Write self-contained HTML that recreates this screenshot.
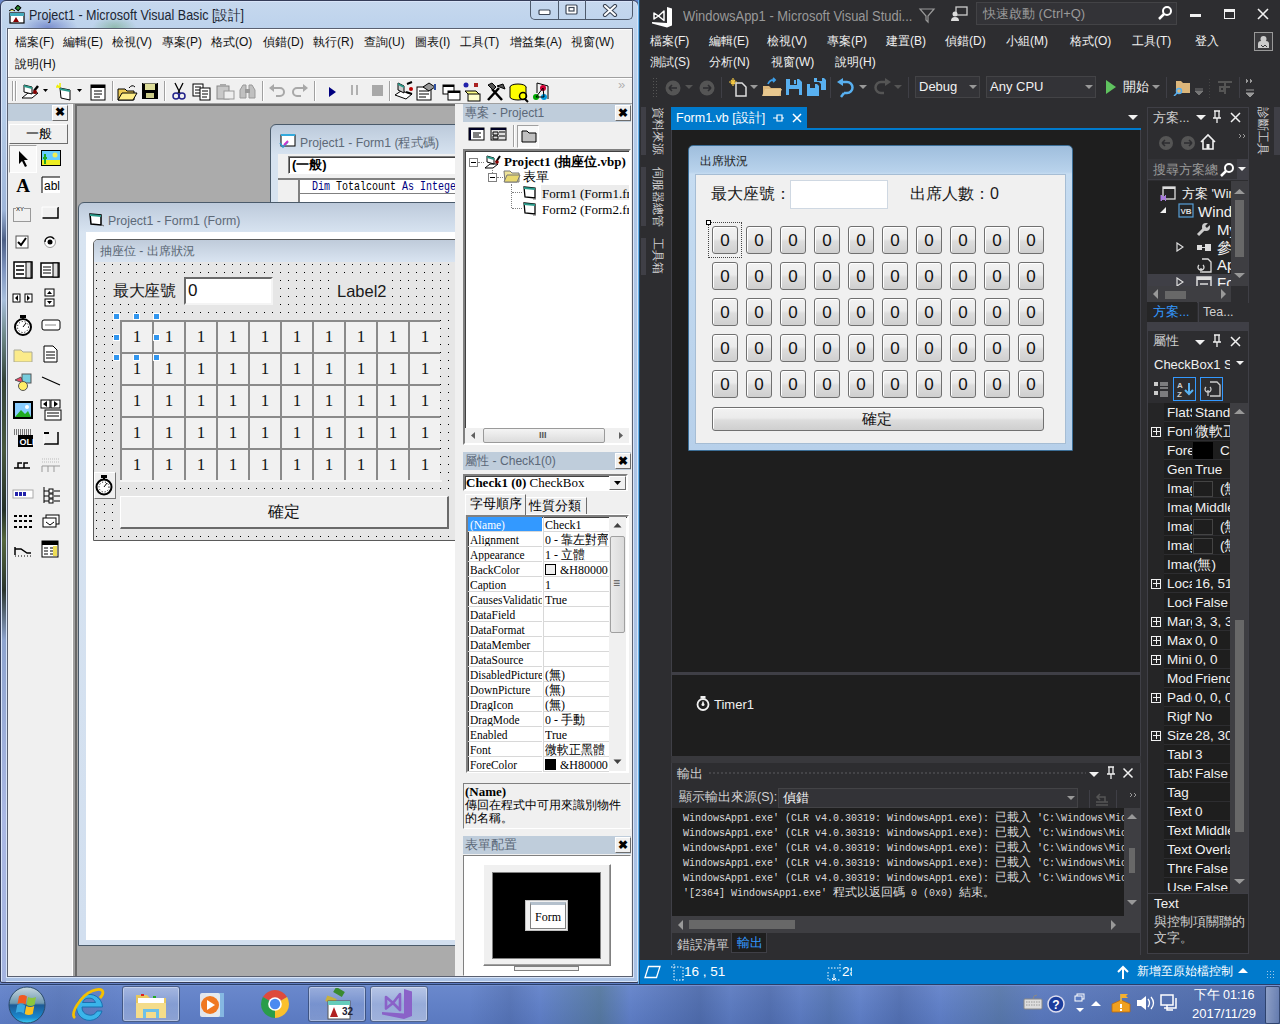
<!DOCTYPE html><html><head><meta charset="utf-8"><style>
*{margin:0;padding:0;box-sizing:border-box}
html,body{width:1280px;height:1024px;overflow:hidden}
body{position:relative;font-family:"Liberation Sans",sans-serif;background:#5b7cc4}
div{position:absolute}
.ui{font-size:13px;line-height:15px}
.mono{font-family:"Liberation Mono",monospace}
.serif{font-family:"Liberation Serif",serif}
</style></head><body>

<div style="left:0px;top:0px;width:1280px;height:1024px;background:linear-gradient(90deg,#6a86c8,#5b7bc2 40%,#6d8fd0 70%,#5876c0)"></div>
<div style="left:0px;top:0px;width:639px;height:983px;background:linear-gradient(180deg,#c6d8ee 0px,#bcd2ec 30px,#aec6e6 200px,#a9c1e4 900px);border:1px solid #343c58;border-radius:6px 6px 2px 2px;box-shadow:inset 0 0 0 1px #d8e4f8"></div>
<div style="left:18px;top:14px;width:60px;height:15px;background:radial-gradient(ellipse at 50% 90%,rgba(40,60,170,.45),rgba(40,60,170,0) 70%)"></div>
<div style="left:92px;top:16px;width:45px;height:13px;background:radial-gradient(ellipse at 50% 90%,rgba(60,140,60,.35),rgba(60,140,60,0) 70%)"></div>
<div style="left:29px;top:7px;white-space:nowrap;font-size:14px;color:#1b2533;line-height:16px;transform:scaleX(.895);transform-origin:0 0">Project1 - Microsoft Visual Basic [設計]</div>
<svg style="position:absolute;left:7px;top:5px;" width="20" height="20" viewBox="0 0 20 20"><rect x="9" y="1" width="4" height="4" fill="#2a8a30" stroke="#000" transform="rotate(40 11 3)"/><path d="M2 6 l3-2 l3 2" stroke="#000" fill="#dd5"/><rect x="3" y="8" width="14" height="10" fill="#fff" stroke="#000" stroke-width="1.2"/><rect x="3" y="8" width="14" height="3" fill="#4ab"/><path d="M6 17 l3-5 l3 5z" fill="#800"/></svg>
<div style="left:530px;top:0px;width:103px;height:20px;border:1px solid #4e5a6c;border-top:none;border-radius:0 0 5px 5px"></div>
<div style="left:558px;top:0px;width:1px;height:20px;background:#4e5a6c"></div>
<div style="left:585px;top:0px;width:1px;height:20px;background:#4e5a6c"></div>
<svg style="position:absolute;left:538px;top:9px;" width="14" height="8" viewBox="0 0 14 8"><rect x="1" y="1" width="11" height="4.5" rx="1" fill="#fff" stroke="#3c4656" stroke-width="1.2"/></svg>
<svg style="position:absolute;left:565px;top:4px;" width="14" height="12" viewBox="0 0 14 12"><rect x="1" y="1" width="11" height="9" rx="1" fill="#fff" stroke="#3c4656" stroke-width="1.2"/><rect x="4" y="3.5" width="5" height="3.5" fill="none" stroke="#3c4656" stroke-width="1.2"/></svg>
<svg style="position:absolute;left:602px;top:4px;" width="16" height="13" viewBox="0 0 16 13"><path d="M3 2 L13 11 M13 2 L3 11" stroke="#3c4656" stroke-width="4.2" stroke-linecap="round"/><path d="M3 2 L13 11 M13 2 L3 11" stroke="#fff" stroke-width="2" stroke-linecap="round"/></svg>
<div style="left:2px;top:120px;width:4px;height:862px;background:linear-gradient(180deg,#b4cbe7 0px,#9fb6da 90px,#4c5f86 120px,#7f95bf 150px,#a9bfdc 180px,#6f8a8a 215px,#34443a 260px,#48583e 330px,#243028 390px,#56683e 420px,#2a342c 470px,#8ea4cf 520px,#aab8e4 700px,#a4b4e0 862px)"></div>
<div style="left:6px;top:28px;width:628px;height:950px;border:1px solid #d8e4f8"></div>
<div style="left:7px;top:28px;width:626px;height:949px;background:#f0f0f0;border:1px solid #5a6070;box-shadow:inset 1px 1px #fff"></div>
<div style="left:15px;top:34px;white-space:nowrap;font-size:12px;color:#111;line-height:16px">檔案(F)</div>
<div style="left:63px;top:34px;white-space:nowrap;font-size:12px;color:#111;line-height:16px">編輯(E)</div>
<div style="left:112px;top:34px;white-space:nowrap;font-size:12px;color:#111;line-height:16px">檢視(V)</div>
<div style="left:162px;top:34px;white-space:nowrap;font-size:12px;color:#111;line-height:16px">專案(P)</div>
<div style="left:211px;top:34px;white-space:nowrap;font-size:12px;color:#111;line-height:16px">格式(O)</div>
<div style="left:263px;top:34px;white-space:nowrap;font-size:12px;color:#111;line-height:16px">偵錯(D)</div>
<div style="left:313px;top:34px;white-space:nowrap;font-size:12px;color:#111;line-height:16px">執行(R)</div>
<div style="left:364px;top:34px;white-space:nowrap;font-size:12px;color:#111;line-height:16px">查詢(U)</div>
<div style="left:415px;top:34px;white-space:nowrap;font-size:12px;color:#111;line-height:16px">圖表(I)</div>
<div style="left:460px;top:34px;white-space:nowrap;font-size:12px;color:#111;line-height:16px">工具(T)</div>
<div style="left:510px;top:34px;white-space:nowrap;font-size:12px;color:#111;line-height:16px">增益集(A)</div>
<div style="left:571px;top:34px;white-space:nowrap;font-size:12px;color:#111;line-height:16px">視窗(W)</div>
<div style="left:15px;top:56px;white-space:nowrap;font-size:12px;color:#111;line-height:16px">說明(H)</div>
<div style="left:8px;top:77px;width:624px;height:1px;background:#a0a0a0"></div>
<div style="left:8px;top:78px;width:624px;height:1px;background:#fff"></div>
<div style="left:8px;top:79px;width:624px;height:24px;background:#f0f0f0"></div>
<div style="left:8px;top:103px;width:624px;height:1px;background:#a0a0a0"></div>
<div style="left:8px;top:104px;width:67px;height:872px;background:#f0f0f0"></div>
<div style="left:8px;top:104px;width:60px;height:17px;background:#bfcddb"></div>
<div style="left:52px;top:105px;width:16px;height:16px;background:#f0f0f0;border:1px solid;border-color:#fff #6d6d6d #6d6d6d #fff"></div>
<div style="left:55px;top:104px;white-space:nowrap;font-size:12px;font-weight:bold;color:#000;line-height:16px">✖</div>
<div style="left:9px;top:124px;width:59px;height:20px;background:#f0f0f0;border:1px solid;border-color:#fff #6d6d6d #6d6d6d #fff"></div>
<div style="left:26px;top:126px;white-space:nowrap;font-size:13px;color:#000;line-height:16px">一般</div>
<div style="left:72px;top:104px;width:1px;height:872px;background:#fff"></div>
<div style="left:73px;top:104px;width:2px;height:872px;background:#a0a0a0"></div>
<div style="left:75px;top:104px;width:380px;height:872px;background:#ababab;border-left:2px solid #696969;border-top:2px solid #696969"></div>
<div style="left:455px;top:104px;width:177px;height:872px;background:#f0f0f0"></div>
<div style="left:12px;top:81px;width:1px;height:20px;background:#a0a0a0;box-shadow:1px 0 #fff"></div>
<div style="left:15px;top:81px;width:1px;height:20px;background:#a0a0a0;box-shadow:1px 0 #fff"></div>
<div style="left:112px;top:81px;width:1px;height:20px;background:#a0a0a0;box-shadow:1px 0 #fff"></div>
<div style="left:164px;top:81px;width:1px;height:20px;background:#a0a0a0;box-shadow:1px 0 #fff"></div>
<div style="left:262px;top:81px;width:1px;height:20px;background:#a0a0a0;box-shadow:1px 0 #fff"></div>
<div style="left:314px;top:81px;width:1px;height:20px;background:#a0a0a0;box-shadow:1px 0 #fff"></div>
<div style="left:389px;top:81px;width:1px;height:20px;background:#a0a0a0;box-shadow:1px 0 #fff"></div>
<svg style="position:absolute;left:20px;top:81px;" width="22" height="20" viewBox="0 0 22 20"><path d="M2 17 L8 12 L18 12 L12 17 Z" fill="#fff" stroke="#000"/><path d="M4 4 L12 6 L12 13 L4 11 Z" fill="#fff" stroke="#000"/><path d="M4 4 L12 6 L12 8 L4 6Z" fill="#2a9a8a"/><path d="M14 10 l4-5" stroke="#000" stroke-width="2.5"/><circle cx="15" cy="11" r="2" fill="#800"/></svg>
<svg style="position:absolute;left:43px;top:89px;" width="6" height="4" viewBox="0 0 6 4"><path d="M0 0h5l-2.5 3z" fill="#000"/></svg>
<svg style="position:absolute;left:54px;top:81px;" width="22" height="21" viewBox="0 0 22 21"><path d="M3 4 L6 7 M6 2 v4 M2 6h4" stroke="#ee0" stroke-width="1.5"/><path d="M6 7 L16 9 L16 19 L7 17 Z" fill="#fff" stroke="#000"/><path d="M6 7 L16 9 L16 11 L6 9Z" fill="#2a9a8a"/></svg>
<svg style="position:absolute;left:77px;top:89px;" width="6" height="4" viewBox="0 0 6 4"><path d="M0 0h5l-2.5 3z" fill="#000"/></svg>
<svg style="position:absolute;left:88px;top:82px;" width="20" height="20" viewBox="0 0 20 20"><rect x="3" y="3" width="14" height="15" fill="#fff" stroke="#000"/><rect x="3" y="3" width="14" height="3" fill="#000"/><path d="M6 9h8M6 12h8M6 15h6" stroke="#000"/></svg>
<svg style="position:absolute;left:116px;top:82px;" width="22" height="20" viewBox="0 0 22 20"><path d="M2 7h7l2 2h7v9H2z" fill="#ec5" stroke="#000"/><path d="M2 18l4-7h15l-4 7z" fill="#fe8" stroke="#000"/><path d="M13 6 q3-4 6 -1" stroke="#000" fill="none"/></svg>
<svg style="position:absolute;left:140px;top:81px;" width="20" height="20" viewBox="0 0 20 20"><rect x="2" y="2" width="16" height="16" fill="#000"/><rect x="5" y="3" width="10" height="6" fill="#dd9"/><rect x="6" y="12" width="8" height="5" fill="#cc8"/><rect x="3" y="2" width="14" height="1" fill="#776"/></svg>
<svg style="position:absolute;left:169px;top:81px;" width="20" height="21" viewBox="0 0 20 21"><path d="M6 2 L11 12 M14 2 L9 12" stroke="#000" stroke-width="1.3"/><circle cx="7" cy="15" r="3" fill="none" stroke="#22228a" stroke-width="1.5"/><circle cx="13" cy="15" r="3" fill="none" stroke="#22228a" stroke-width="1.5"/></svg>
<svg style="position:absolute;left:191px;top:81px;" width="22" height="20" viewBox="0 0 22 20"><rect x="2" y="3" width="10" height="12" fill="#fff" stroke="#000"/><path d="M4 6h6M4 9h6M4 12h5" stroke="#000"/><rect x="9" y="7" width="10" height="12" fill="#fff" stroke="#000"/><path d="M11 10h6M11 13h6M11 16h5" stroke="#000"/></svg>
<svg style="position:absolute;left:215px;top:81px;" width="22" height="20" viewBox="0 0 22 20"><rect x="2" y="5" width="12" height="13" fill="#c8c8c8" stroke="#888"/><rect x="9" y="10" width="10" height="8" fill="#eee" stroke="#999"/><rect x="5" y="3" width="6" height="3" fill="#aaa"/></svg>
<svg style="position:absolute;left:237px;top:81px;" width="22" height="20" viewBox="0 0 22 20"><path d="M3 17 v-8 l3-5 h3 v13z M12 17v-13h3l3 5v8z" fill="#c0c0c0" stroke="#999"/><rect x="8" y="8" width="5" height="4" fill="#999"/></svg>
<svg style="position:absolute;left:267px;top:82px;" width="20" height="18" viewBox="0 0 20 18"><path d="M5 6 h8 a4 4 0 0 1 0 8 h-4" stroke="#a8a8a8" stroke-width="2" fill="none"/><path d="M2 6 l5-4 v8z" fill="#a8a8a8"/></svg>
<svg style="position:absolute;left:290px;top:82px;" width="20" height="18" viewBox="0 0 20 18"><path d="M15 6 h-8 a4 4 0 0 0 0 8 h4" stroke="#a8a8a8" stroke-width="2" fill="none"/><path d="M18 6 l-5-4 v8z" fill="#a8a8a8"/></svg>
<svg style="position:absolute;left:326px;top:85px;" width="14" height="14" viewBox="0 0 14 14"><path d="M3 2 L10 7 L3 12z" fill="#000080"/></svg>
<div style="left:351px;top:85px;width:2px;height:10px;background:#b0b0b0"></div>
<div style="left:356px;top:85px;width:2px;height:10px;background:#b0b0b0"></div>
<div style="left:372px;top:85px;width:11px;height:11px;background:#a8a8a8"></div>
<svg style="position:absolute;left:393px;top:80px;" width="22" height="22" viewBox="0 0 22 22"><path d="M2 15 L8 11 L19 14 L13 19z" fill="#fff" stroke="#000"/><path d="M5 3 L11 6 L11 13 L5 10z" fill="#ccc" stroke="#000"/><path d="M5 3 L11 6 L11 8 L5 5Z" fill="#2a9a8a"/><path d="M14 4 l5 -2 M13 12 l6 2" stroke="#000" stroke-width="2"/><circle cx="18" cy="9" r="2" fill="#b00"/></svg>
<svg style="position:absolute;left:415px;top:81px;" width="22" height="22" viewBox="0 0 22 22"><rect x="2" y="6" width="14" height="13" fill="#fff" stroke="#000"/><path d="M4 10h10M4 13h10M4 16h7" stroke="#000"/><path d="M8 6 L14 2 L20 6 L14 10z" fill="#999" stroke="#000"/><rect x="19" y="3" width="2" height="6" fill="#3050a0"/></svg>
<svg style="position:absolute;left:440px;top:82px;" width="22" height="21" viewBox="0 0 22 21"><rect x="3" y="3" width="11" height="9" fill="#fff" stroke="#000"/><rect x="3" y="3" width="11" height="2" fill="#000"/><rect x="8" y="9" width="12" height="9" fill="#fff" stroke="#000"/><rect x="8" y="9" width="12" height="2" fill="#000"/></svg>
<svg style="position:absolute;left:462px;top:81px;" width="22" height="22" viewBox="0 0 22 22"><circle cx="4" cy="4" r="2.5" fill="#22a"/><rect x="12" y="2" width="4" height="4" fill="#a22"/><path d="M3 10 L14 10 L18 14 L7 14z" fill="#ff8" stroke="#000"/><rect x="6" y="13" width="12" height="7" fill="#ffc" stroke="#000"/></svg>
<svg style="position:absolute;left:485px;top:81px;" width="22" height="22" viewBox="0 0 22 22"><path d="M3 19 L14 7" stroke="#000" stroke-width="2.5"/><path d="M17 19 L7 8" stroke="#000" stroke-width="2.5"/><path d="M3 4 l5 5 l3-3 l-4-4z M12 5 l6-2 l2 5z" fill="#555" stroke="#000"/></svg>
<svg style="position:absolute;left:508px;top:81px;" width="22" height="22" viewBox="0 0 22 22"><ellipse cx="10" cy="6" rx="8" ry="3" fill="#ff0" stroke="#000"/><path d="M2 6 v10 a8 3 0 0 0 16 0 v-10" fill="#ff0" stroke="#000"/><circle cx="15" cy="15" r="3.5" fill="none" stroke="#000" stroke-width="1.5"/><path d="M17 18 l3 3" stroke="#000" stroke-width="2"/></svg>
<svg style="position:absolute;left:531px;top:80px;" width="22" height="22" viewBox="0 0 22 22"><path d="M6 3 L17 6 L17 19" fill="none" stroke="#000"/><path d="M6 3 v10" stroke="#000"/><circle cx="12" cy="8" r="3" fill="#c03"/><circle cx="5" cy="17" r="3" fill="#0a0"/><circle cx="13" cy="17" r="3" fill="#09d"/><path d="M12 8 L5 17 M12 8 L13 17 M5 17h8" stroke="#000"/></svg>
<div style="left:618px;top:77px;white-space:nowrap;font-size:13px;color:#b0b0b0">&raquo;</div>
<div style="left:9px;top:145px;width:28px;height:28px;background:#f8f8f8;border:1px solid;border-color:#a0a0a0 #fff #fff #a0a0a0"></div>
<svg style="position:absolute;left:15px;top:150px;" width="16" height="18" viewBox="0 0 16 18"><path d="M4 1 L4 14 L7 11 L10 17 L12 16 L9 10 L13 10z" fill="#000"/></svg>
<svg style="position:absolute;left:40px;top:149px;" width="22" height="18" viewBox="0 0 22 18"><rect x="1" y="1" width="20" height="16" fill="#000"/><rect x="2" y="2" width="18" height="9" fill="#6cf"/><rect x="2" y="11" width="18" height="5" fill="#ee2"/><circle cx="15" cy="6" r="2.5" fill="#ee5"/><path d="M5 15 v-10 M3 9 h4" stroke="#2a2" stroke-width="2"/></svg>
<svg style="position:absolute;left:12px;top:176px;" width="22" height="18" viewBox="0 0 22 18"><text x="11" y="16" font-family="Liberation Serif" font-size="19" font-weight="bold" text-anchor="middle" fill="#000">A</text></svg>
<svg style="position:absolute;left:41px;top:176px;" width="20" height="18" viewBox="0 0 20 18"><rect x="1" y="1" width="18" height="16" fill="#fff"/><path d="M1 1 v16 M1 1 h18" stroke="#000"/><text x="3" y="14" font-family="Liberation Sans" font-size="12" fill="#000">abl</text></svg>
<svg style="position:absolute;left:12px;top:204px;" width="20" height="18" viewBox="0 0 20 18"><rect x="1.5" y="4.5" width="17" height="13" fill="none" stroke="#999"/><rect x="4" y="1" width="8" height="6" fill="#f0f0f0"/><text x="4" y="7" font-size="6" fill="#000">XY</text></svg>
<svg style="position:absolute;left:40px;top:205px;" width="20" height="16" viewBox="0 0 20 16"><path d="M2 13 h16 v-11" stroke="#000" stroke-width="1.5" fill="none"/><path d="M2 14 v-12 h16" stroke="#fff" fill="none"/></svg>
<svg style="position:absolute;left:15px;top:235px;" width="14" height="14" viewBox="0 0 14 14"><rect x="1" y="1" width="12" height="12" fill="#fff" stroke="#555"/><path d="M3 7 l3 3 l5 -7" stroke="#000" stroke-width="2" fill="none"/></svg>
<svg style="position:absolute;left:43px;top:235px;" width="14" height="14" viewBox="0 0 14 14"><circle cx="7" cy="7" r="5.5" fill="#fff" stroke="#999"/><circle cx="7" cy="7" r="2.5" fill="#000"/><path d="M2 7 a5 5 0 0 1 9-3" stroke="#000" fill="none" stroke-width="1.3"/></svg>
<svg style="position:absolute;left:13px;top:261px;" width="20" height="18" viewBox="0 0 20 18"><rect x="1" y="1" width="18" height="16" fill="#fff" stroke="#000" stroke-width="1.5"/><rect x="13" y="1" width="5" height="16" fill="#ddd" stroke="#000"/><path d="M3 5h8M3 9h8M3 13h8" stroke="#000" stroke-width="1.5"/></svg>
<svg style="position:absolute;left:40px;top:262px;" width="20" height="16" viewBox="0 0 20 16"><rect x="1" y="1" width="18" height="14" fill="#fff" stroke="#000" stroke-width="1.5"/><rect x="13" y="1" width="5" height="14" fill="#ddd" stroke="#000"/><path d="M3 5h8M3 8h8M3 11h8" stroke="#000" stroke-width="1.2"/></svg>
<svg style="position:absolute;left:12px;top:292px;" width="22" height="12" viewBox="0 0 22 12"><rect x="1" y="2" width="7" height="8" fill="#fff" stroke="#000"/><rect x="13" y="2" width="7" height="8" fill="#fff" stroke="#000"/><path d="M6 3 l-3 3 l3 3z M15 3 l3 3 l-3 3z" fill="#000"/></svg>
<svg style="position:absolute;left:44px;top:288px;" width="12" height="20" viewBox="0 0 12 20"><rect x="1" y="1" width="9" height="7" fill="#fff" stroke="#000"/><rect x="1" y="11" width="9" height="7" fill="#fff" stroke="#000"/><path d="M3 6 l2.5-3 l2.5 3z M3 13 l2.5 3 l2.5-3z" fill="#000"/></svg>
<svg style="position:absolute;left:13px;top:315px;" width="20" height="21" viewBox="0 0 20 21"><circle cx="10" cy="12" r="8" fill="#fff" stroke="#000" stroke-width="2"/><rect x="7" y="0" width="6" height="3" fill="#000"/><path d="M10 12 l3-4" stroke="#000"/><circle cx="10" cy="12" r="5.5" fill="none" stroke="#000" stroke-dasharray="1 2"/></svg>
<svg style="position:absolute;left:41px;top:319px;" width="20" height="12" viewBox="0 0 20 12"><rect x="1" y="1" width="18" height="10" rx="2" fill="#fff" stroke="#000"/><path d="M4 6h11" stroke="#888"/></svg>
<svg style="position:absolute;left:13px;top:346px;" width="20" height="16" viewBox="0 0 20 16"><path d="M1 4 h7 l2 2 h9 v10 h-18z" fill="#fbeb8a" stroke="#aa9"/></svg>
<svg style="position:absolute;left:42px;top:345px;" width="16" height="18" viewBox="0 0 16 18"><path d="M2 1 h9 l4 4 v12 h-13z" fill="#fff" stroke="#000"/><path d="M4 7h9M4 10h9M4 13h9" stroke="#000"/></svg>
<svg style="position:absolute;left:13px;top:372px;" width="20" height="20" viewBox="0 0 20 20"><rect x="9" y="2" width="9" height="9" fill="#7cd" stroke="#555"/><path d="M2 8 l6 -3 l2 6z" fill="#e46" stroke="#555"/><circle cx="10" cy="14" r="4.5" fill="#fe6" stroke="#555"/></svg>
<svg style="position:absolute;left:40px;top:374px;" width="22" height="14" viewBox="0 0 22 14"><path d="M2 3 L20 11" stroke="#000" stroke-width="1.3"/></svg>
<svg style="position:absolute;left:12px;top:400px;" width="22" height="20" viewBox="0 0 22 20"><rect x="1" y="1" width="20" height="18" fill="#000"/><rect x="3" y="3" width="16" height="14" fill="#8cf"/><path d="M3 17 l6-7 l4 4 l3-3 l3 6z" fill="#2a2"/><circle cx="15" cy="7" r="2" fill="#fff"/></svg>
<svg style="position:absolute;left:39px;top:399px;" width="24" height="22" viewBox="0 0 24 22"><rect x="2" y="1" width="9" height="8" fill="#fff" stroke="#000"/><rect x="12" y="1" width="9" height="8" fill="#fff" stroke="#000"/><path d="M8 2 l-4 3 l4 3z M15 2 l4 3 l-4 3z" fill="#000"/><rect x="6" y="11" width="16" height="10" fill="#fff" stroke="#000"/><path d="M8 14h12M8 17h12" stroke="#000"/></svg>
<svg style="position:absolute;left:12px;top:428px;" width="22" height="20" viewBox="0 0 22 20"><path d="M2 2 h18 M2 4h18 M2 6h18" stroke="#000" stroke-dasharray="1 1"/><rect x="6" y="7" width="15" height="12" fill="#000"/><text x="7.5" y="17" font-size="9" font-family="Liberation Sans" font-weight="bold" fill="#fff">OLE</text></svg>
<svg style="position:absolute;left:42px;top:430px;" width="18" height="16" viewBox="0 0 18 16"><path d="M2 14 h14 v-12" stroke="#000" stroke-width="1.5" fill="none"/><path d="M2 14v-12h3" stroke="#fff" fill="none"/><rect x="2" y="2" width="5" height="2" fill="#000"/></svg>
<svg style="position:absolute;left:12px;top:458px;" width="20" height="14" viewBox="0 0 20 14"><path d="M2 10 h16 M6 10 v-5 h4 M12 10 v-5h4" stroke="#000" stroke-width="1.5" fill="none"/></svg>
<svg style="position:absolute;left:40px;top:456px;" width="22" height="18" viewBox="0 0 22 18"><path d="M2 3 h18 M2 6 h18" stroke="#bbb" stroke-dasharray="1 1"/><path d="M2 16 v-6 h18 M8 10 v6 M14 10 v6" stroke="#999" fill="none"/></svg>
<svg style="position:absolute;left:12px;top:489px;" width="22" height="10" viewBox="0 0 22 10"><rect x="1" y="1" width="20" height="8" fill="#fff" stroke="#aaa"/><rect x="3" y="3" width="3" height="4" fill="#22a"/><rect x="7" y="3" width="3" height="4" fill="#22a"/><rect x="11" y="3" width="3" height="4" fill="#22a"/></svg>
<svg style="position:absolute;left:40px;top:485px;" width="22" height="20" viewBox="0 0 22 20"><path d="M4 2 v16 M4 6 h5 M4 11 h5 M4 16h5" stroke="#000" fill="none"/><rect x="9" y="4" width="4" height="4" fill="#fff" stroke="#000"/><rect x="9" y="9" width="4" height="4" fill="#fff" stroke="#000"/><rect x="9" y="14" width="4" height="4" fill="#fff" stroke="#000"/><path d="M14 6h6M14 11h6M14 16h6" stroke="#000"/></svg>
<svg style="position:absolute;left:12px;top:513px;" width="22" height="18" viewBox="0 0 22 18"><path d="M2 3h18M2 8h18M2 14h18" stroke="#000" stroke-dasharray="3 2" stroke-width="2"/></svg>
<svg style="position:absolute;left:40px;top:514px;" width="20" height="16" viewBox="0 0 20 16"><rect x="6" y="1" width="13" height="9" fill="#fff" stroke="#000"/><rect x="3" y="4" width="13" height="9" fill="#fff" stroke="#000"/><path d="M6 8 l4 3 l4-3" stroke="#000" fill="none"/></svg>
<svg style="position:absolute;left:12px;top:540px;" width="22" height="18" viewBox="0 0 22 18"><path d="M3 15 v-8 M3 9 h6 l6 4 h4" stroke="#000" stroke-width="1.5" fill="none"/><path d="M3 16 h17" stroke="#000" stroke-dasharray="1 2"/></svg>
<svg style="position:absolute;left:41px;top:540px;" width="18" height="18" viewBox="0 0 18 18"><rect x="1" y="1" width="16" height="16" fill="#fff" stroke="#000"/><rect x="1" y="1" width="16" height="4" fill="#000"/><path d="M3 8h4M3 11h4M3 14h4M9 8h6M9 11h6M9 14h6" stroke="#000"/><rect x="12" y="6" width="4" height="10" fill="#ed5"/></svg>
<div style="left:77px;top:106px;width:378px;height:870px;overflow:hidden"><div style="left:-77px;top:-106px;width:1280px;height:1024px">
<div style="left:270px;top:124px;width:200px;height:80px;background:linear-gradient(180deg,#bccadb,#d7e3f0 30px);border:1px solid #4a5a6a;border-radius:6px 0 0 0"></div>
<svg style="position:absolute;left:279px;top:133px;" width="18" height="16" viewBox="0 0 18 16"><rect x="2" y="2" width="14" height="11" fill="#fff" stroke="#000"/><path d="M2 2h14" stroke="#3ad" stroke-width="2"/><path d="M1 10 l3 4 l5-5" stroke="#39c" stroke-width="1.5" fill="none"/><path d="M5 12 l4 -4" stroke="#c3c" stroke-width="2"/></svg>
<div style="left:300px;top:135px;white-space:nowrap;font-size:13px;color:#5d6977;line-height:16px;transform:scaleX(.94);transform-origin:0 0">Project1 - Form1 (程式碼)</div>
<div style="left:278px;top:154px;width:185px;height:50px;background:#f0f0f0"></div>
<div style="left:288px;top:156px;width:175px;height:18px;background:#fff;border:1px solid;border-color:#808080 #fff #fff #808080;box-shadow:inset 1px 1px #404040"></div>
<div style="left:292px;top:157px;white-space:nowrap;font-size:13px;font-weight:bold;color:#000;line-height:16px">(一般)</div>
<div style="left:278px;top:178px;width:185px;height:26px;background:#fff;border-top:2px solid #808080"></div>
<div style="left:278px;top:180px;width:22px;height:24px;background:#f0f0f0;border-right:2px solid #808080"></div>
<div style="left:312px;top:180px;white-space:nowrap;font-family:Liberation Mono;font-size:12px;color:#000;line-height:14px;transform:scaleX(0.833);transform-origin:0 0"><span style="color:#000080">Dim</span> Totalcount <span style="color:#000080">As Intege</span></div>
<div style="left:300px;top:193px;width:163px;height:1px;background:#808080"></div>
<div style="left:78px;top:202px;width:400px;height:744px;background:linear-gradient(180deg,#bdcadb 0px,#d8e4f1 30px,#d2dfef 100%);border:1px solid #4a5a6a;border-radius:6px 0 0 0"></div>
<svg style="position:absolute;left:88px;top:212px;" width="18" height="16" viewBox="0 0 18 16"><path d="M2 2 L13 3 L13 13 L3 12 Z" fill="#fff" stroke="#000" stroke-width="1.5"/><path d="M2 2 L13 3 L13 5 L2 4Z" fill="#2a9a8a"/><path d="M14 13 l2 1" stroke="#666"/></svg>
<div style="left:108px;top:213px;white-space:nowrap;font-size:13px;color:#5d6977;line-height:16px;transform:scaleX(.95);transform-origin:0 0">Project1 - Form1 (Form)</div>
<div style="left:86px;top:232px;width:380px;height:708px;background:#fff"></div>
<div style="left:93px;top:239px;width:380px;height:302px;background:#e4e4e4;border:1px solid #5a5a5a;border-radius:5px 0 0 0"></div>
<div style="left:94px;top:240px;width:370px;height:22px;background:linear-gradient(180deg,#bfcbda,#d9e4f1);border-radius:4px 0 0 0"></div>
<div style="left:100px;top:244px;white-space:nowrap;font-size:12px;color:#596673;line-height:15px">抽座位 - 出席狀況</div>
<svg style="position:absolute;left:95px;top:262px" width="370" height="277"><defs><pattern id="dots" x="1" y="2" width="8" height="8" patternUnits="userSpaceOnUse"><rect x="0" y="0" width="1" height="1" fill="#000"/></pattern></defs><rect width="370" height="277" fill="#e6e6e6"/><rect width="370" height="277" fill="url(#dots)"/></svg>
<div style="left:111px;top:280px;width:67px;height:22px;background:#e6e6e6"></div>
<div style="left:331px;top:279px;width:60px;height:22px;background:#e6e6e6"></div>
<div style="left:113px;top:281px;white-space:nowrap;font-size:16px;color:#1a1a1a;line-height:19px;letter-spacing:-0.5px">最大座號</div>
<div style="left:184px;top:277px;width:89px;height:28px;background:#fff;border:2px solid;border-color:#6a6a6a #f4f4f4 #f4f4f4 #6a6a6a"></div>
<div style="left:188px;top:281px;white-space:nowrap;font-size:17px;color:#111;line-height:20px">0</div>
<div style="left:337px;top:281px;white-space:nowrap;font-size:16.5px;color:#1a1a1a;line-height:20px">Label2</div>
<div style="left:120px;top:320px;width:32px;height:32px;background:#f1f1f1;border-left:2px solid #8a8a8a;border-top:2px solid #8a8a8a;font-size:17px;line-height:30px;text-align:center;color:#111;font-family:Liberation Serif,serif">1</div><div style="left:152px;top:320px;width:32px;height:32px;background:#f1f1f1;border-left:2px solid #8a8a8a;border-top:2px solid #8a8a8a;font-size:17px;line-height:30px;text-align:center;color:#111;font-family:Liberation Serif,serif">1</div><div style="left:184px;top:320px;width:32px;height:32px;background:#f1f1f1;border-left:2px solid #8a8a8a;border-top:2px solid #8a8a8a;font-size:17px;line-height:30px;text-align:center;color:#111;font-family:Liberation Serif,serif">1</div><div style="left:216px;top:320px;width:32px;height:32px;background:#f1f1f1;border-left:2px solid #8a8a8a;border-top:2px solid #8a8a8a;font-size:17px;line-height:30px;text-align:center;color:#111;font-family:Liberation Serif,serif">1</div><div style="left:248px;top:320px;width:32px;height:32px;background:#f1f1f1;border-left:2px solid #8a8a8a;border-top:2px solid #8a8a8a;font-size:17px;line-height:30px;text-align:center;color:#111;font-family:Liberation Serif,serif">1</div><div style="left:280px;top:320px;width:32px;height:32px;background:#f1f1f1;border-left:2px solid #8a8a8a;border-top:2px solid #8a8a8a;font-size:17px;line-height:30px;text-align:center;color:#111;font-family:Liberation Serif,serif">1</div><div style="left:312px;top:320px;width:32px;height:32px;background:#f1f1f1;border-left:2px solid #8a8a8a;border-top:2px solid #8a8a8a;font-size:17px;line-height:30px;text-align:center;color:#111;font-family:Liberation Serif,serif">1</div><div style="left:344px;top:320px;width:32px;height:32px;background:#f1f1f1;border-left:2px solid #8a8a8a;border-top:2px solid #8a8a8a;font-size:17px;line-height:30px;text-align:center;color:#111;font-family:Liberation Serif,serif">1</div><div style="left:376px;top:320px;width:32px;height:32px;background:#f1f1f1;border-left:2px solid #8a8a8a;border-top:2px solid #8a8a8a;font-size:17px;line-height:30px;text-align:center;color:#111;font-family:Liberation Serif,serif">1</div><div style="left:408px;top:320px;width:32px;height:32px;background:#f1f1f1;border-left:2px solid #8a8a8a;border-top:2px solid #8a8a8a;font-size:17px;line-height:30px;text-align:center;color:#111;font-family:Liberation Serif,serif">1</div><div style="left:120px;top:352px;width:32px;height:32px;background:#f1f1f1;border-left:2px solid #8a8a8a;border-top:2px solid #8a8a8a;font-size:17px;line-height:30px;text-align:center;color:#111;font-family:Liberation Serif,serif">1</div><div style="left:152px;top:352px;width:32px;height:32px;background:#f1f1f1;border-left:2px solid #8a8a8a;border-top:2px solid #8a8a8a;font-size:17px;line-height:30px;text-align:center;color:#111;font-family:Liberation Serif,serif">1</div><div style="left:184px;top:352px;width:32px;height:32px;background:#f1f1f1;border-left:2px solid #8a8a8a;border-top:2px solid #8a8a8a;font-size:17px;line-height:30px;text-align:center;color:#111;font-family:Liberation Serif,serif">1</div><div style="left:216px;top:352px;width:32px;height:32px;background:#f1f1f1;border-left:2px solid #8a8a8a;border-top:2px solid #8a8a8a;font-size:17px;line-height:30px;text-align:center;color:#111;font-family:Liberation Serif,serif">1</div><div style="left:248px;top:352px;width:32px;height:32px;background:#f1f1f1;border-left:2px solid #8a8a8a;border-top:2px solid #8a8a8a;font-size:17px;line-height:30px;text-align:center;color:#111;font-family:Liberation Serif,serif">1</div><div style="left:280px;top:352px;width:32px;height:32px;background:#f1f1f1;border-left:2px solid #8a8a8a;border-top:2px solid #8a8a8a;font-size:17px;line-height:30px;text-align:center;color:#111;font-family:Liberation Serif,serif">1</div><div style="left:312px;top:352px;width:32px;height:32px;background:#f1f1f1;border-left:2px solid #8a8a8a;border-top:2px solid #8a8a8a;font-size:17px;line-height:30px;text-align:center;color:#111;font-family:Liberation Serif,serif">1</div><div style="left:344px;top:352px;width:32px;height:32px;background:#f1f1f1;border-left:2px solid #8a8a8a;border-top:2px solid #8a8a8a;font-size:17px;line-height:30px;text-align:center;color:#111;font-family:Liberation Serif,serif">1</div><div style="left:376px;top:352px;width:32px;height:32px;background:#f1f1f1;border-left:2px solid #8a8a8a;border-top:2px solid #8a8a8a;font-size:17px;line-height:30px;text-align:center;color:#111;font-family:Liberation Serif,serif">1</div><div style="left:408px;top:352px;width:32px;height:32px;background:#f1f1f1;border-left:2px solid #8a8a8a;border-top:2px solid #8a8a8a;font-size:17px;line-height:30px;text-align:center;color:#111;font-family:Liberation Serif,serif">1</div><div style="left:120px;top:384px;width:32px;height:32px;background:#f1f1f1;border-left:2px solid #8a8a8a;border-top:2px solid #8a8a8a;font-size:17px;line-height:30px;text-align:center;color:#111;font-family:Liberation Serif,serif">1</div><div style="left:152px;top:384px;width:32px;height:32px;background:#f1f1f1;border-left:2px solid #8a8a8a;border-top:2px solid #8a8a8a;font-size:17px;line-height:30px;text-align:center;color:#111;font-family:Liberation Serif,serif">1</div><div style="left:184px;top:384px;width:32px;height:32px;background:#f1f1f1;border-left:2px solid #8a8a8a;border-top:2px solid #8a8a8a;font-size:17px;line-height:30px;text-align:center;color:#111;font-family:Liberation Serif,serif">1</div><div style="left:216px;top:384px;width:32px;height:32px;background:#f1f1f1;border-left:2px solid #8a8a8a;border-top:2px solid #8a8a8a;font-size:17px;line-height:30px;text-align:center;color:#111;font-family:Liberation Serif,serif">1</div><div style="left:248px;top:384px;width:32px;height:32px;background:#f1f1f1;border-left:2px solid #8a8a8a;border-top:2px solid #8a8a8a;font-size:17px;line-height:30px;text-align:center;color:#111;font-family:Liberation Serif,serif">1</div><div style="left:280px;top:384px;width:32px;height:32px;background:#f1f1f1;border-left:2px solid #8a8a8a;border-top:2px solid #8a8a8a;font-size:17px;line-height:30px;text-align:center;color:#111;font-family:Liberation Serif,serif">1</div><div style="left:312px;top:384px;width:32px;height:32px;background:#f1f1f1;border-left:2px solid #8a8a8a;border-top:2px solid #8a8a8a;font-size:17px;line-height:30px;text-align:center;color:#111;font-family:Liberation Serif,serif">1</div><div style="left:344px;top:384px;width:32px;height:32px;background:#f1f1f1;border-left:2px solid #8a8a8a;border-top:2px solid #8a8a8a;font-size:17px;line-height:30px;text-align:center;color:#111;font-family:Liberation Serif,serif">1</div><div style="left:376px;top:384px;width:32px;height:32px;background:#f1f1f1;border-left:2px solid #8a8a8a;border-top:2px solid #8a8a8a;font-size:17px;line-height:30px;text-align:center;color:#111;font-family:Liberation Serif,serif">1</div><div style="left:408px;top:384px;width:32px;height:32px;background:#f1f1f1;border-left:2px solid #8a8a8a;border-top:2px solid #8a8a8a;font-size:17px;line-height:30px;text-align:center;color:#111;font-family:Liberation Serif,serif">1</div><div style="left:120px;top:416px;width:32px;height:32px;background:#f1f1f1;border-left:2px solid #8a8a8a;border-top:2px solid #8a8a8a;font-size:17px;line-height:30px;text-align:center;color:#111;font-family:Liberation Serif,serif">1</div><div style="left:152px;top:416px;width:32px;height:32px;background:#f1f1f1;border-left:2px solid #8a8a8a;border-top:2px solid #8a8a8a;font-size:17px;line-height:30px;text-align:center;color:#111;font-family:Liberation Serif,serif">1</div><div style="left:184px;top:416px;width:32px;height:32px;background:#f1f1f1;border-left:2px solid #8a8a8a;border-top:2px solid #8a8a8a;font-size:17px;line-height:30px;text-align:center;color:#111;font-family:Liberation Serif,serif">1</div><div style="left:216px;top:416px;width:32px;height:32px;background:#f1f1f1;border-left:2px solid #8a8a8a;border-top:2px solid #8a8a8a;font-size:17px;line-height:30px;text-align:center;color:#111;font-family:Liberation Serif,serif">1</div><div style="left:248px;top:416px;width:32px;height:32px;background:#f1f1f1;border-left:2px solid #8a8a8a;border-top:2px solid #8a8a8a;font-size:17px;line-height:30px;text-align:center;color:#111;font-family:Liberation Serif,serif">1</div><div style="left:280px;top:416px;width:32px;height:32px;background:#f1f1f1;border-left:2px solid #8a8a8a;border-top:2px solid #8a8a8a;font-size:17px;line-height:30px;text-align:center;color:#111;font-family:Liberation Serif,serif">1</div><div style="left:312px;top:416px;width:32px;height:32px;background:#f1f1f1;border-left:2px solid #8a8a8a;border-top:2px solid #8a8a8a;font-size:17px;line-height:30px;text-align:center;color:#111;font-family:Liberation Serif,serif">1</div><div style="left:344px;top:416px;width:32px;height:32px;background:#f1f1f1;border-left:2px solid #8a8a8a;border-top:2px solid #8a8a8a;font-size:17px;line-height:30px;text-align:center;color:#111;font-family:Liberation Serif,serif">1</div><div style="left:376px;top:416px;width:32px;height:32px;background:#f1f1f1;border-left:2px solid #8a8a8a;border-top:2px solid #8a8a8a;font-size:17px;line-height:30px;text-align:center;color:#111;font-family:Liberation Serif,serif">1</div><div style="left:408px;top:416px;width:32px;height:32px;background:#f1f1f1;border-left:2px solid #8a8a8a;border-top:2px solid #8a8a8a;font-size:17px;line-height:30px;text-align:center;color:#111;font-family:Liberation Serif,serif">1</div><div style="left:120px;top:448px;width:32px;height:32px;background:#f1f1f1;border-left:2px solid #8a8a8a;border-top:2px solid #8a8a8a;font-size:17px;line-height:30px;text-align:center;color:#111;font-family:Liberation Serif,serif">1</div><div style="left:152px;top:448px;width:32px;height:32px;background:#f1f1f1;border-left:2px solid #8a8a8a;border-top:2px solid #8a8a8a;font-size:17px;line-height:30px;text-align:center;color:#111;font-family:Liberation Serif,serif">1</div><div style="left:184px;top:448px;width:32px;height:32px;background:#f1f1f1;border-left:2px solid #8a8a8a;border-top:2px solid #8a8a8a;font-size:17px;line-height:30px;text-align:center;color:#111;font-family:Liberation Serif,serif">1</div><div style="left:216px;top:448px;width:32px;height:32px;background:#f1f1f1;border-left:2px solid #8a8a8a;border-top:2px solid #8a8a8a;font-size:17px;line-height:30px;text-align:center;color:#111;font-family:Liberation Serif,serif">1</div><div style="left:248px;top:448px;width:32px;height:32px;background:#f1f1f1;border-left:2px solid #8a8a8a;border-top:2px solid #8a8a8a;font-size:17px;line-height:30px;text-align:center;color:#111;font-family:Liberation Serif,serif">1</div><div style="left:280px;top:448px;width:32px;height:32px;background:#f1f1f1;border-left:2px solid #8a8a8a;border-top:2px solid #8a8a8a;font-size:17px;line-height:30px;text-align:center;color:#111;font-family:Liberation Serif,serif">1</div><div style="left:312px;top:448px;width:32px;height:32px;background:#f1f1f1;border-left:2px solid #8a8a8a;border-top:2px solid #8a8a8a;font-size:17px;line-height:30px;text-align:center;color:#111;font-family:Liberation Serif,serif">1</div><div style="left:344px;top:448px;width:32px;height:32px;background:#f1f1f1;border-left:2px solid #8a8a8a;border-top:2px solid #8a8a8a;font-size:17px;line-height:30px;text-align:center;color:#111;font-family:Liberation Serif,serif">1</div><div style="left:376px;top:448px;width:32px;height:32px;background:#f1f1f1;border-left:2px solid #8a8a8a;border-top:2px solid #8a8a8a;font-size:17px;line-height:30px;text-align:center;color:#111;font-family:Liberation Serif,serif">1</div><div style="left:408px;top:448px;width:32px;height:32px;background:#f1f1f1;border-left:2px solid #8a8a8a;border-top:2px solid #8a8a8a;font-size:17px;line-height:30px;text-align:center;color:#111;font-family:Liberation Serif,serif">1</div>
<div style="left:120px;top:480px;width:322px;height:2px;background:#f6f6f6"></div>
<div style="left:114px;top:314px;width:5px;height:5px;background:#3296ee;outline:1px solid #fff"></div>
<div style="left:134px;top:314px;width:5px;height:5px;background:#3296ee;outline:1px solid #fff"></div>
<div style="left:154px;top:314px;width:5px;height:5px;background:#3296ee;outline:1px solid #fff"></div>
<div style="left:114px;top:335px;width:5px;height:5px;background:#3296ee;outline:1px solid #fff"></div>
<div style="left:154px;top:335px;width:5px;height:5px;background:#3296ee;outline:1px solid #fff"></div>
<div style="left:114px;top:355px;width:5px;height:5px;background:#3296ee;outline:1px solid #fff"></div>
<div style="left:134px;top:355px;width:5px;height:5px;background:#3296ee;outline:1px solid #fff"></div>
<div style="left:154px;top:355px;width:5px;height:5px;background:#3296ee;outline:1px solid #fff"></div>
<div style="left:94px;top:472px;width:22px;height:27px;background:#f0f0f0;border:1px solid;border-color:#fff #777 #777 #fff"></div>
<svg style="position:absolute;left:95px;top:474px;" width="20" height="22" viewBox="0 0 20 22"><circle cx="9" cy="13" r="7.5" fill="#fff" stroke="#000" stroke-width="2"/><rect x="6" y="1" width="6" height="3" fill="#000"/><path d="M9 4v2" stroke="#000" stroke-width="2"/><path d="M9 13 l3-4" stroke="#000"/><circle cx="9" cy="13" r="5" fill="none" stroke="#000" stroke-dasharray="1 2"/></svg>
<div style="left:120px;top:496px;width:329px;height:33px;background:#f0f0f0;border-style:solid;border-width:1px 2px 2px 1px;border-color:#fff #6a6a6a #6a6a6a #fff"></div>
<div style="left:268px;top:502px;white-space:nowrap;font-size:16px;color:#111;line-height:19px">確定</div>
</div></div>
<div style="left:463px;top:104px;width:168px;height:18px;background:#bfcddb"></div>
<div style="left:465px;top:105px;white-space:nowrap;font-size:13px;color:#5b6878;line-height:16px;transform:scaleX(.93);transform-origin:0 0">專案 - Project1</div>
<div style="left:615px;top:105px;width:16px;height:16px;background:#f0f0f0;border:1px solid;border-color:#fff #6d6d6d #6d6d6d #fff"></div><div style="left:618px;top:105px;white-space:nowrap;font-size:12px;font-weight:bold;color:#000;line-height:16px">✖</div>
<svg style="position:absolute;left:468px;top:125px;" width="18" height="18" viewBox="0 0 18 18"><rect x="1" y="3" width="15" height="12" fill="#fff" stroke="#000"/><rect x="1" y="3" width="15" height="2" fill="#002"/><rect x="1" y="3" width="2" height="12" fill="#002"/><path d="M5 8h8M5 10h6M5 12h8" stroke="#000"/></svg>
<svg style="position:absolute;left:490px;top:125px;" width="18" height="18" viewBox="0 0 18 18"><rect x="1" y="3" width="15" height="12" fill="#ddd" stroke="#000"/><rect x="1" y="3" width="15" height="2" fill="#002"/><path d="M3 7h5v3h-5zM3 11h5v3h-5z M9 7h6 M9 11h6" stroke="#000" fill="none"/></svg>
<div style="left:513px;top:125px;width:1px;height:22px;background:#a0a0a0;box-shadow:1px 0 #fff"></div>
<div style="left:517px;top:125px;width:22px;height:23px;background:#f8f8f8;border:1px solid;border-color:#a0a0a0 #fff #fff #a0a0a0"></div>
<svg style="position:absolute;left:520px;top:128px;" width="18" height="16" viewBox="0 0 18 16"><path d="M2 3 h5 l2 2 h7 v9 h-14z" fill="#c0c0c0" stroke="#000"/></svg>
<div style="left:463px;top:149px;width:168px;height:296px;background:#fff;border:2px solid;border-color:#808080 #fff #fff #808080;box-shadow:inset 1px 1px #404040"></div>
<div style="left:469px;top:158px;width:9px;height:9px;border:1px solid #808080;background:#fff"></div>
<div style="left:471px;top:162px;width:5px;height:1px;background:#000"></div>
<div style="left:478px;top:162px;width:6px;height:1px;border-top:1px dotted #808080"></div>
<svg style="position:absolute;left:484px;top:151px;" width="20" height="20" viewBox="0 0 20 20"><path d="M1 17 L6 13 L14 13 L9 17 Z" fill="#fff" stroke="#000"/><path d="M3 5 L10 7 L10 13 L3 11 Z" fill="#fff" stroke="#000"/><path d="M3 5 L10 7 L10 9 L3 7Z" fill="#2a9a8a"/><path d="M12 11 l4-6" stroke="#000" stroke-width="2"/><circle cx="13" cy="11" r="1.8" fill="#800"/></svg>
<div style="left:504px;top:154px;white-space:nowrap;font-family:Liberation Serif,serif;font-size:13px;font-weight:bold;color:#000;line-height:15px">Project1 (抽座位.vbp)</div>
<div style="left:492px;top:167px;width:1px;height:6px;border-left:1px dotted #808080"></div>
<div style="left:488px;top:173px;width:9px;height:9px;border:1px solid #808080;background:#fff"></div>
<div style="left:490px;top:177px;width:5px;height:1px;background:#000"></div>
<div style="left:497px;top:177px;width:6px;height:1px;border-top:1px dotted #808080"></div>
<svg style="position:absolute;left:503px;top:168px;" width="18" height="16" viewBox="0 0 18 16"><path d="M1 3 h6 l2 2 h7 v9 h-14z" fill="#efe49a" stroke="#777"/><path d="M1 14 l3-7 h13 l-3 7z" fill="#e8d870" stroke="#777"/></svg>
<div style="left:523px;top:169px;white-space:nowrap;font-size:13px;color:#000;line-height:15px">表單</div>
<div style="left:511px;top:184px;width:1px;height:24px;border-left:1px dotted #808080"></div>
<div style="left:512px;top:192px;width:10px;height:1px;border-top:1px dotted #808080"></div>
<div style="left:512px;top:208px;width:10px;height:1px;border-top:1px dotted #808080"></div>
<div style="left:541px;top:185px;width:88px;height:15px;background:#ececec"></div>
<svg style="position:absolute;left:522px;top:185px;" width="18" height="16" viewBox="0 0 18 16"><path d="M2 2 L13 3 L13 13 L3 12 Z" fill="#fff" stroke="#000" stroke-width="1.3"/><path d="M2 2 L13 3 L13 5 L2 4Z" fill="#2a9a8a"/><path d="M11 14 l3 0" stroke="#666"/></svg>
<div style="left:541px;top:185px;width:88px;height:16px;overflow:hidden"><div style="left:-541px;top:-185px;width:1280px;height:1024px">
<div style="left:542px;top:186px;white-space:nowrap;font-family:Liberation Serif,serif;font-size:13px;color:#000;line-height:15px">Form1 (Form1.frm)</div>
</div></div>
<svg style="position:absolute;left:522px;top:201px;" width="18" height="16" viewBox="0 0 18 16"><path d="M2 2 L13 3 L13 13 L3 12 Z" fill="#fff" stroke="#000" stroke-width="1.3"/><path d="M2 2 L13 3 L13 5 L2 4Z" fill="#2a9a8a"/><path d="M11 14 l3 0" stroke="#666"/></svg>
<div style="left:541px;top:201px;width:88px;height:16px;overflow:hidden"><div style="left:-541px;top:-201px;width:1280px;height:1024px">
<div style="left:542px;top:202px;white-space:nowrap;font-family:Liberation Serif,serif;font-size:13px;color:#000;line-height:15px">Form2 (Form2.frm)</div>
</div></div>
<div style="left:465px;top:428px;width:164px;height:15px;background:#f0f0f0"></div>
<svg style="position:absolute;left:469px;top:431px;" width="8" height="9" viewBox="0 0 8 9"><path d="M6 1 L2 4.5 L6 8z" fill="#606060"/></svg>
<svg style="position:absolute;left:617px;top:431px;" width="8" height="9" viewBox="0 0 8 9"><path d="M2 1 L6 4.5 L2 8z" fill="#606060"/></svg>
<div style="left:483px;top:428px;width:122px;height:15px;background:linear-gradient(#f4f4f4,#dcdcdc);border:1px solid #9a9a9a;border-radius:2px"></div>
<div style="left:539px;top:429px;white-space:nowrap;font-size:9px;color:#555;line-height:13px;font-weight:bold">III</div>
<div style="left:463px;top:452px;width:168px;height:18px;background:#bfcddb"></div>
<div style="left:465px;top:453px;white-space:nowrap;font-size:13px;color:#5b6878;line-height:16px;transform:scaleX(.93);transform-origin:0 0">屬性 - Check1(0)</div>
<div style="left:615px;top:453px;width:16px;height:16px;background:#f0f0f0;border:1px solid;border-color:#fff #6d6d6d #6d6d6d #fff"></div><div style="left:618px;top:453px;white-space:nowrap;font-size:12px;font-weight:bold;color:#000;line-height:16px">✖</div>
<div style="left:463px;top:474px;width:165px;height:17px;background:#fff;border:2px solid;border-color:#808080 #fff #fff #808080;box-shadow:inset 1px 1px #404040"></div>
<div style="left:466px;top:475px;white-space:nowrap;font-family:Liberation Serif,serif;font-size:13px;color:#000;line-height:15px"><b>Check1 (0)</b> CheckBox</div>
<div style="left:609px;top:476px;width:17px;height:14px;background:#f0f0f0;border:1px solid;border-color:#fff #6d6d6d #6d6d6d #fff"></div>
<svg style="position:absolute;left:613px;top:480px;" width="9" height="6" viewBox="0 0 9 6"><path d="M1 1 h7 l-3.5 4z" fill="#000"/></svg>
<div style="left:465px;top:514px;width:165px;height:1px;background:#fff"></div>
<div style="left:525px;top:497px;width:62px;height:17px;background:#f0f0f0;border:1px solid;border-bottom:none;border-color:#fff #6d6d6d #6d6d6d #fff"></div>
<div style="left:465px;top:494px;width:61px;height:21px;background:#f0f0f0;border:1px solid;border-bottom:none;border-color:#fff #6d6d6d #6d6d6d #fff"></div>
<div style="left:470px;top:496px;white-space:nowrap;font-size:13px;color:#000;line-height:16px">字母順序</div>
<div style="left:529px;top:498px;white-space:nowrap;font-size:13px;color:#000;line-height:16px">性質分類</div>
<div style="left:466px;top:515px;width:163px;height:258px;background:#fff;border:2px solid;border-color:#808080 #fff #fff #808080;box-shadow:inset 1px 1px #404040"></div>
<div style="left:468px;top:517px;width:74px;height:15px;overflow:hidden;background:#3399ff;color:#fff;font-family:Liberation Serif,serif;font-size:13px;line-height:15px;padding-left:2px;white-space:nowrap;border-bottom:1px solid #d8d8d8"><span style="display:inline-block;transform:scaleX(.88);transform-origin:0 0">(Name)</span></div><div style="left:543px;top:517px;width:66px;height:15px;border-left:1px solid #d8d8d8;border-bottom:1px solid #d8d8d8"></div><div style="left:545px;top:517px;width:63px;height:15px;overflow:hidden;font-family:Liberation Serif,serif;font-size:13px;line-height:15px;white-space:nowrap;color:#000"><span style="display:inline-block;transform:scaleX(.92);transform-origin:0 0">Check1</span></div><div style="left:468px;top:532px;width:74px;height:15px;overflow:hidden;color:#000;font-family:Liberation Serif,serif;font-size:13px;line-height:15px;padding-left:2px;white-space:nowrap;border-bottom:1px solid #d8d8d8"><span style="display:inline-block;transform:scaleX(.88);transform-origin:0 0">Alignment</span></div><div style="left:543px;top:532px;width:66px;height:15px;border-left:1px solid #d8d8d8;border-bottom:1px solid #d8d8d8"></div><div style="left:545px;top:532px;width:63px;height:15px;overflow:hidden;font-family:Liberation Serif,serif;font-size:13px;line-height:15px;white-space:nowrap;color:#000"><span style="display:inline-block;transform:scaleX(.92);transform-origin:0 0">0 - 靠左對齊</span></div><div style="left:468px;top:547px;width:74px;height:15px;overflow:hidden;color:#000;font-family:Liberation Serif,serif;font-size:13px;line-height:15px;padding-left:2px;white-space:nowrap;border-bottom:1px solid #d8d8d8"><span style="display:inline-block;transform:scaleX(.88);transform-origin:0 0">Appearance</span></div><div style="left:543px;top:547px;width:66px;height:15px;border-left:1px solid #d8d8d8;border-bottom:1px solid #d8d8d8"></div><div style="left:545px;top:547px;width:63px;height:15px;overflow:hidden;font-family:Liberation Serif,serif;font-size:13px;line-height:15px;white-space:nowrap;color:#000"><span style="display:inline-block;transform:scaleX(.92);transform-origin:0 0">1 - 立體</span></div><div style="left:468px;top:562px;width:74px;height:15px;overflow:hidden;color:#000;font-family:Liberation Serif,serif;font-size:13px;line-height:15px;padding-left:2px;white-space:nowrap;border-bottom:1px solid #d8d8d8"><span style="display:inline-block;transform:scaleX(.88);transform-origin:0 0">BackColor</span></div><div style="left:545px;top:564px;width:11px;height:11px;background:#f0f0f0;border:1px solid #000"></div><div style="left:543px;top:562px;width:66px;height:15px;border-left:1px solid #d8d8d8;border-bottom:1px solid #d8d8d8"></div><div style="left:560px;top:562px;width:48px;height:15px;overflow:hidden;font-family:Liberation Serif,serif;font-size:13px;line-height:15px;white-space:nowrap;color:#000"><span style="display:inline-block;transform:scaleX(.92);transform-origin:0 0">&H800000</span></div><div style="left:468px;top:577px;width:74px;height:15px;overflow:hidden;color:#000;font-family:Liberation Serif,serif;font-size:13px;line-height:15px;padding-left:2px;white-space:nowrap;border-bottom:1px solid #d8d8d8"><span style="display:inline-block;transform:scaleX(.88);transform-origin:0 0">Caption</span></div><div style="left:543px;top:577px;width:66px;height:15px;border-left:1px solid #d8d8d8;border-bottom:1px solid #d8d8d8"></div><div style="left:545px;top:577px;width:63px;height:15px;overflow:hidden;font-family:Liberation Serif,serif;font-size:13px;line-height:15px;white-space:nowrap;color:#000"><span style="display:inline-block;transform:scaleX(.92);transform-origin:0 0">1</span></div><div style="left:468px;top:592px;width:74px;height:15px;overflow:hidden;color:#000;font-family:Liberation Serif,serif;font-size:13px;line-height:15px;padding-left:2px;white-space:nowrap;border-bottom:1px solid #d8d8d8"><span style="display:inline-block;transform:scaleX(.88);transform-origin:0 0">CausesValidation</span></div><div style="left:543px;top:592px;width:66px;height:15px;border-left:1px solid #d8d8d8;border-bottom:1px solid #d8d8d8"></div><div style="left:545px;top:592px;width:63px;height:15px;overflow:hidden;font-family:Liberation Serif,serif;font-size:13px;line-height:15px;white-space:nowrap;color:#000"><span style="display:inline-block;transform:scaleX(.92);transform-origin:0 0">True</span></div><div style="left:468px;top:607px;width:74px;height:15px;overflow:hidden;color:#000;font-family:Liberation Serif,serif;font-size:13px;line-height:15px;padding-left:2px;white-space:nowrap;border-bottom:1px solid #d8d8d8"><span style="display:inline-block;transform:scaleX(.88);transform-origin:0 0">DataField</span></div><div style="left:543px;top:607px;width:66px;height:15px;border-left:1px solid #d8d8d8;border-bottom:1px solid #d8d8d8"></div><div style="left:545px;top:607px;width:63px;height:15px;overflow:hidden;font-family:Liberation Serif,serif;font-size:13px;line-height:15px;white-space:nowrap;color:#000"><span style="display:inline-block;transform:scaleX(.92);transform-origin:0 0"></span></div><div style="left:468px;top:622px;width:74px;height:15px;overflow:hidden;color:#000;font-family:Liberation Serif,serif;font-size:13px;line-height:15px;padding-left:2px;white-space:nowrap;border-bottom:1px solid #d8d8d8"><span style="display:inline-block;transform:scaleX(.88);transform-origin:0 0">DataFormat</span></div><div style="left:543px;top:622px;width:66px;height:15px;border-left:1px solid #d8d8d8;border-bottom:1px solid #d8d8d8"></div><div style="left:545px;top:622px;width:63px;height:15px;overflow:hidden;font-family:Liberation Serif,serif;font-size:13px;line-height:15px;white-space:nowrap;color:#000"><span style="display:inline-block;transform:scaleX(.92);transform-origin:0 0"></span></div><div style="left:468px;top:637px;width:74px;height:15px;overflow:hidden;color:#000;font-family:Liberation Serif,serif;font-size:13px;line-height:15px;padding-left:2px;white-space:nowrap;border-bottom:1px solid #d8d8d8"><span style="display:inline-block;transform:scaleX(.88);transform-origin:0 0">DataMember</span></div><div style="left:543px;top:637px;width:66px;height:15px;border-left:1px solid #d8d8d8;border-bottom:1px solid #d8d8d8"></div><div style="left:545px;top:637px;width:63px;height:15px;overflow:hidden;font-family:Liberation Serif,serif;font-size:13px;line-height:15px;white-space:nowrap;color:#000"><span style="display:inline-block;transform:scaleX(.92);transform-origin:0 0"></span></div><div style="left:468px;top:652px;width:74px;height:15px;overflow:hidden;color:#000;font-family:Liberation Serif,serif;font-size:13px;line-height:15px;padding-left:2px;white-space:nowrap;border-bottom:1px solid #d8d8d8"><span style="display:inline-block;transform:scaleX(.88);transform-origin:0 0">DataSource</span></div><div style="left:543px;top:652px;width:66px;height:15px;border-left:1px solid #d8d8d8;border-bottom:1px solid #d8d8d8"></div><div style="left:545px;top:652px;width:63px;height:15px;overflow:hidden;font-family:Liberation Serif,serif;font-size:13px;line-height:15px;white-space:nowrap;color:#000"><span style="display:inline-block;transform:scaleX(.92);transform-origin:0 0"></span></div><div style="left:468px;top:667px;width:74px;height:15px;overflow:hidden;color:#000;font-family:Liberation Serif,serif;font-size:13px;line-height:15px;padding-left:2px;white-space:nowrap;border-bottom:1px solid #d8d8d8"><span style="display:inline-block;transform:scaleX(.88);transform-origin:0 0">DisabledPicture</span></div><div style="left:543px;top:667px;width:66px;height:15px;border-left:1px solid #d8d8d8;border-bottom:1px solid #d8d8d8"></div><div style="left:545px;top:667px;width:63px;height:15px;overflow:hidden;font-family:Liberation Serif,serif;font-size:13px;line-height:15px;white-space:nowrap;color:#000"><span style="display:inline-block;transform:scaleX(.92);transform-origin:0 0">(無)</span></div><div style="left:468px;top:682px;width:74px;height:15px;overflow:hidden;color:#000;font-family:Liberation Serif,serif;font-size:13px;line-height:15px;padding-left:2px;white-space:nowrap;border-bottom:1px solid #d8d8d8"><span style="display:inline-block;transform:scaleX(.88);transform-origin:0 0">DownPicture</span></div><div style="left:543px;top:682px;width:66px;height:15px;border-left:1px solid #d8d8d8;border-bottom:1px solid #d8d8d8"></div><div style="left:545px;top:682px;width:63px;height:15px;overflow:hidden;font-family:Liberation Serif,serif;font-size:13px;line-height:15px;white-space:nowrap;color:#000"><span style="display:inline-block;transform:scaleX(.92);transform-origin:0 0">(無)</span></div><div style="left:468px;top:697px;width:74px;height:15px;overflow:hidden;color:#000;font-family:Liberation Serif,serif;font-size:13px;line-height:15px;padding-left:2px;white-space:nowrap;border-bottom:1px solid #d8d8d8"><span style="display:inline-block;transform:scaleX(.88);transform-origin:0 0">DragIcon</span></div><div style="left:543px;top:697px;width:66px;height:15px;border-left:1px solid #d8d8d8;border-bottom:1px solid #d8d8d8"></div><div style="left:545px;top:697px;width:63px;height:15px;overflow:hidden;font-family:Liberation Serif,serif;font-size:13px;line-height:15px;white-space:nowrap;color:#000"><span style="display:inline-block;transform:scaleX(.92);transform-origin:0 0">(無)</span></div><div style="left:468px;top:712px;width:74px;height:15px;overflow:hidden;color:#000;font-family:Liberation Serif,serif;font-size:13px;line-height:15px;padding-left:2px;white-space:nowrap;border-bottom:1px solid #d8d8d8"><span style="display:inline-block;transform:scaleX(.88);transform-origin:0 0">DragMode</span></div><div style="left:543px;top:712px;width:66px;height:15px;border-left:1px solid #d8d8d8;border-bottom:1px solid #d8d8d8"></div><div style="left:545px;top:712px;width:63px;height:15px;overflow:hidden;font-family:Liberation Serif,serif;font-size:13px;line-height:15px;white-space:nowrap;color:#000"><span style="display:inline-block;transform:scaleX(.92);transform-origin:0 0">0 - 手動</span></div><div style="left:468px;top:727px;width:74px;height:15px;overflow:hidden;color:#000;font-family:Liberation Serif,serif;font-size:13px;line-height:15px;padding-left:2px;white-space:nowrap;border-bottom:1px solid #d8d8d8"><span style="display:inline-block;transform:scaleX(.88);transform-origin:0 0">Enabled</span></div><div style="left:543px;top:727px;width:66px;height:15px;border-left:1px solid #d8d8d8;border-bottom:1px solid #d8d8d8"></div><div style="left:545px;top:727px;width:63px;height:15px;overflow:hidden;font-family:Liberation Serif,serif;font-size:13px;line-height:15px;white-space:nowrap;color:#000"><span style="display:inline-block;transform:scaleX(.92);transform-origin:0 0">True</span></div><div style="left:468px;top:742px;width:74px;height:15px;overflow:hidden;color:#000;font-family:Liberation Serif,serif;font-size:13px;line-height:15px;padding-left:2px;white-space:nowrap;border-bottom:1px solid #d8d8d8"><span style="display:inline-block;transform:scaleX(.88);transform-origin:0 0">Font</span></div><div style="left:543px;top:742px;width:66px;height:15px;border-left:1px solid #d8d8d8;border-bottom:1px solid #d8d8d8"></div><div style="left:545px;top:742px;width:63px;height:15px;overflow:hidden;font-family:Liberation Serif,serif;font-size:13px;line-height:15px;white-space:nowrap;color:#000"><span style="display:inline-block;transform:scaleX(.92);transform-origin:0 0">微軟正黑體</span></div><div style="left:468px;top:757px;width:74px;height:15px;overflow:hidden;color:#000;font-family:Liberation Serif,serif;font-size:13px;line-height:15px;padding-left:2px;white-space:nowrap;border-bottom:1px solid #d8d8d8"><span style="display:inline-block;transform:scaleX(.88);transform-origin:0 0">ForeColor</span></div><div style="left:545px;top:759px;width:11px;height:11px;background:#000;border:1px solid #000"></div><div style="left:543px;top:757px;width:66px;height:15px;border-left:1px solid #d8d8d8;border-bottom:1px solid #d8d8d8"></div><div style="left:560px;top:757px;width:48px;height:15px;overflow:hidden;font-family:Liberation Serif,serif;font-size:13px;line-height:15px;white-space:nowrap;color:#000"><span style="display:inline-block;transform:scaleX(.92);transform-origin:0 0">&H800000</span></div>
<div style="left:609px;top:517px;width:17px;height:254px;background:#f0f0f0"></div>
<svg style="position:absolute;left:612px;top:521px;" width="11" height="8" viewBox="0 0 11 8"><path d="M1.5 6.5 L5.5 2 L9.5 6.5z" fill="#404040"/></svg>
<svg style="position:absolute;left:612px;top:758px;" width="11" height="8" viewBox="0 0 11 8"><path d="M1.5 1.5 L5.5 6 L9.5 1.5z" fill="#404040"/></svg>
<div style="left:610px;top:536px;width:15px;height:97px;background:linear-gradient(90deg,#eaeaea,#dadada);border:1px solid #a0a0a0;border-radius:2px"></div>
<div style="left:613px;top:577px;white-space:nowrap;font-size:12px;color:#555;line-height:12px">≡</div>
<div style="left:463px;top:783px;width:168px;height:46px;background:#f0f0f0;border:1px solid;border-color:#808080 #fff #fff #808080"></div>
<div style="left:465px;top:785px;white-space:nowrap;font-family:Liberation Serif,serif;font-size:13px;color:#000;line-height:14px"><b>(Name)</b></div>
<div style="left:465px;top:799px;white-space:nowrap;font-size:12px;color:#000;line-height:13px">傳回在程式中可用來識別物件</div>
<div style="left:465px;top:812px;white-space:nowrap;font-size:12px;color:#000;line-height:13px">的名稱。</div>
<div style="left:463px;top:836px;width:168px;height:18px;background:#bfcddb"></div>
<div style="left:465px;top:837px;white-space:nowrap;font-size:13px;color:#5b6878;line-height:16px">表單配置</div>
<div style="left:615px;top:837px;width:16px;height:16px;background:#f0f0f0;border:1px solid;border-color:#fff #6d6d6d #6d6d6d #fff"></div><div style="left:618px;top:837px;white-space:nowrap;font-size:12px;font-weight:bold;color:#000;line-height:16px">✖</div>
<div style="left:463px;top:855px;width:168px;height:121px;background:#fff;border:1px solid;border-color:#808080 #fff #fff #808080"></div>
<div style="left:483px;top:864px;width:128px;height:102px;background:#f0f0f0;border:1px solid;border-color:#fff #808080 #808080 #fff;box-shadow:inset -1px -1px #a0a0a0"></div>
<div style="left:492px;top:872px;width:109px;height:87px;background:#000;border:1px solid #808080"></div>
<div style="left:514px;top:966px;width:65px;height:5px;background:#f0f0f0;border:1px solid #808080"></div>
<div style="left:525px;top:900px;width:43px;height:31px;background:#f0f0f0;border:1px solid #c0c0c0"></div>
<div style="left:530px;top:902px;width:36px;height:27px;background:#fff;border:1px solid #808080;border-top:3px solid #b4c0cc"></div>
<div style="left:535px;top:910px;white-space:nowrap;font-family:Liberation Serif,serif;font-size:12px;color:#000;line-height:14px">Form</div>
<div style="left:639px;top:0px;width:641px;height:984px;background:#2d2d30"></div>
<div style="left:638px;top:0px;width:1px;height:984px;background:#6ab4ec"></div>
<div style="left:639px;top:0px;width:1px;height:984px;background:#1e4a70"></div>
<svg style="position:absolute;left:646px;top:2px;" width="34" height="30" viewBox="0 0 34 30"><path d="M21 5 L26 6.5 L26 23.5 L21 25.5 Z" fill="#fff"/><path d="M6 20 L21 21 L21 25.5 L6 21.6 Z" fill="#fff"/><path d="M8 11 L12.5 14 L8 17 Z M18 9 L12.5 14 L18 18.5 Z" fill="none" stroke="#fff" stroke-width="1.5" stroke-linejoin="round"/></svg>
<div style="left:683px;top:8px;white-space:nowrap;font-size:14px;color:#999;line-height:16px;transform:scaleX(.925);transform-origin:0 0">WindowsApp1 - Microsoft Visual Studi...</div>
<svg style="position:absolute;left:918px;top:6px;" width="18" height="18" viewBox="0 0 18 18"><path d="M2 3 H16 L10 10 V16 L8 14 V10 Z" fill="none" stroke="#999" stroke-width="1.2"/></svg>
<svg style="position:absolute;left:950px;top:5px;" width="18" height="18" viewBox="0 0 18 18"><rect x="6" y="2" width="11" height="8" fill="none" stroke="#ccc" stroke-width="1.3"/><circle cx="5" cy="9" r="2.5" fill="#ddd"/><path d="M1 16 a4 4 0 0 1 8 0z" fill="#ddd"/></svg>
<div style="left:976px;top:2px;width:201px;height:23px;background:#333337;border:1px solid #434346"></div>
<div style="left:983px;top:6px;white-space:nowrap;font-size:13px;color:#999;line-height:15px">快速啟動 (Ctrl+Q)</div>
<svg style="position:absolute;left:1157px;top:5px;" width="16" height="16" viewBox="0 0 16 16"><circle cx="10" cy="6" r="4" fill="none" stroke="#fff" stroke-width="2"/><path d="M7 9 L2 14" stroke="#fff" stroke-width="2.5"/></svg>
<div style="left:1190px;top:14px;width:11px;height:3px;background:#f1f1f1"></div>
<div style="left:1224px;top:9px;width:11px;height:10px;border:1px solid #f1f1f1;border-top:3px solid #f1f1f1"></div>
<svg style="position:absolute;left:1256px;top:7px;" width="14" height="14" viewBox="0 0 14 14"><path d="M2 2 L12 12 M12 2 L2 12" stroke="#f1f1f1" stroke-width="1.6"/></svg>
<div style="left:650px;top:33px;white-space:nowrap;font-size:12px;color:#f1f1f1;line-height:16px">檔案(F)</div>
<div style="left:709px;top:33px;white-space:nowrap;font-size:12px;color:#f1f1f1;line-height:16px">編輯(E)</div>
<div style="left:767px;top:33px;white-space:nowrap;font-size:12px;color:#f1f1f1;line-height:16px">檢視(V)</div>
<div style="left:827px;top:33px;white-space:nowrap;font-size:12px;color:#f1f1f1;line-height:16px">專案(P)</div>
<div style="left:886px;top:33px;white-space:nowrap;font-size:12px;color:#f1f1f1;line-height:16px">建置(B)</div>
<div style="left:945px;top:33px;white-space:nowrap;font-size:12px;color:#f1f1f1;line-height:16px">偵錯(D)</div>
<div style="left:1006px;top:33px;white-space:nowrap;font-size:12px;color:#f1f1f1;line-height:16px">小組(M)</div>
<div style="left:1070px;top:33px;white-space:nowrap;font-size:12px;color:#f1f1f1;line-height:16px">格式(O)</div>
<div style="left:1132px;top:33px;white-space:nowrap;font-size:12px;color:#f1f1f1;line-height:16px">工具(T)</div>
<div style="left:1195px;top:33px;white-space:nowrap;font-size:12px;color:#f1f1f1;line-height:16px">登入</div>
<div style="left:650px;top:54px;white-space:nowrap;font-size:12px;color:#f1f1f1;line-height:16px">測試(S)</div>
<div style="left:709px;top:54px;white-space:nowrap;font-size:12px;color:#f1f1f1;line-height:16px">分析(N)</div>
<div style="left:771px;top:54px;white-space:nowrap;font-size:12px;color:#f1f1f1;line-height:16px">視窗(W)</div>
<div style="left:835px;top:54px;white-space:nowrap;font-size:12px;color:#f1f1f1;line-height:16px">說明(H)</div>
<div style="left:1254px;top:32px;width:19px;height:19px;border:1px solid #999;background:#3a3a3d"></div>
<svg style="position:absolute;left:1256px;top:34px;" width="15" height="15" viewBox="0 0 15 15"><circle cx="7.5" cy="5" r="3" fill="#ccc"/><path d="M2 14 v-4 a3 3 0 0 1 3-3 h5 a3 3 0 0 1 3 3 v4z" fill="#ccc"/><path d="M5 11 l2 2 l2-2 l2 2" stroke="#3a3a3d" fill="none"/></svg>
<div style="left:652px;top:77px;width:5px;height:20px;background-image:radial-gradient(#555 0.7px,transparent 0.8px);background-size:3px 3px"></div>
<svg style="position:absolute;left:664px;top:79px;" width="18" height="18" viewBox="0 0 18 18"><circle cx="9" cy="9" r="7.5" fill="#555"/><path d="M5 9h8 M5 9 l3-3 M5 9 l3 3" stroke="#2d2d30" stroke-width="1.6"/></svg>
<svg style="position:absolute;left:685px;top:85px;" width="8" height="5" viewBox="0 0 8 5"><path d="M0 0h8l-4 4z" fill="#555"/></svg>
<svg style="position:absolute;left:698px;top:79px;" width="18" height="18" viewBox="0 0 18 18"><circle cx="9" cy="9" r="7.5" fill="#555"/><path d="M5 9h8 M13 9 l-3-3 M13 9 l-3 3" stroke="#2d2d30" stroke-width="1.6"/></svg>
<div style="left:721px;top:77px;width:1px;height:21px;background:#3f3f46"></div>
<svg style="position:absolute;left:728px;top:77px;" width="20" height="20" viewBox="0 0 20 20"><path d="M3 3 l4 4 M7 3 l-4 4 M5 1 v8 M1 5 h8" stroke="#f5c842" stroke-width="1.2"/><path d="M8 6 h6 l4 4 v9 h-10 z" fill="none" stroke="#ddd" stroke-width="1.5"/></svg>
<svg style="position:absolute;left:750px;top:85px;" width="8" height="5" viewBox="0 0 8 5"><path d="M0 0h8l-4 4z" fill="#999"/></svg>
<svg style="position:absolute;left:761px;top:77px;" width="22" height="20" viewBox="0 0 22 20"><path d="M2 9 h6 l2 2 h10 v8 h-18z" fill="#dcb67a"/><path d="M1 19 l3-7 h17 l-3 7z" fill="#e8c88f"/><path d="M7 7 q2-5 7-4 M12 1 l2 2 l-2 2" stroke="#3d9ee8" stroke-width="1.8" fill="none"/></svg>
<svg style="position:absolute;left:785px;top:78px;" width="18" height="18" viewBox="0 0 18 18"><path d="M1 1 h13 l3 3 v13 h-16z" fill="#58b0f0"/><rect x="5" y="1" width="7" height="6" fill="#2d2d30"/><rect x="9" y="2" width="2" height="4" fill="#58b0f0"/><rect x="4" y="11" width="10" height="6" fill="#2d2d30"/></svg>
<svg style="position:absolute;left:806px;top:77px;" width="20" height="20" viewBox="0 0 20 20"><path d="M1 7 h10 l2 2 v10 h-12z" fill="#58b0f0"/><path d="M8 1 h10 l2 2 v10 h-5 v-6 l-2-2 h-5z" fill="#58b0f0"/><rect x="4" y="7" width="5" height="4" fill="#2d2d30"/><rect x="11" y="1" width="5" height="3" fill="#2d2d30"/></svg>
<div style="left:830px;top:77px;width:1px;height:21px;background:#3f3f46"></div>
<svg style="position:absolute;left:836px;top:78px;" width="20" height="20" viewBox="0 0 20 20"><path d="M5 4 h6 a5.5 5.5 0 0 1 0 11 h-3" stroke="#58b0f0" stroke-width="2.5" fill="none"/><path d="M1 4 l6 -4 v8z" fill="#58b0f0"/><path d="M8 15 l-3 4" stroke="#58b0f0" stroke-width="2.5"/></svg>
<svg style="position:absolute;left:859px;top:85px;" width="8" height="5" viewBox="0 0 8 5"><path d="M0 0h8l-4 4z" fill="#999"/></svg>
<svg style="position:absolute;left:872px;top:78px;" width="20" height="20" viewBox="0 0 20 20"><path d="M15 4 h-6 a5.5 5.5 0 0 0 0 11 h3" stroke="#555" stroke-width="2.5" fill="none"/><path d="M19 4 l-6 -4 v8z" fill="#555"/></svg>
<svg style="position:absolute;left:894px;top:85px;" width="8" height="5" viewBox="0 0 8 5"><path d="M0 0h8l-4 4z" fill="#555"/></svg>
<div style="left:908px;top:77px;width:1px;height:21px;background:#3f3f46"></div>
<div style="left:915px;top:76px;width:65px;height:22px;background:#333337;border:1px solid #434346"></div>
<div style="left:919px;top:79px;white-space:nowrap;font-size:13px;color:#f1f1f1;line-height:15px">Debug</div>
<svg style="position:absolute;left:969px;top:85px;" width="8" height="5" viewBox="0 0 8 5"><path d="M0 0h8l-4 4z" fill="#999"/></svg>
<div style="left:986px;top:76px;width:110px;height:22px;background:#333337;border:1px solid #434346"></div>
<div style="left:990px;top:79px;white-space:nowrap;font-size:13px;color:#f1f1f1;line-height:15px">Any CPU</div>
<svg style="position:absolute;left:1085px;top:85px;" width="8" height="5" viewBox="0 0 8 5"><path d="M0 0h8l-4 4z" fill="#999"/></svg>
<svg style="position:absolute;left:1105px;top:79px;" width="12" height="16" viewBox="0 0 12 16"><path d="M1 1 L11 8 L1 15z" fill="#5fc35f"/></svg>
<div style="left:1123px;top:79px;white-space:nowrap;font-size:13px;color:#f1f1f1;line-height:15px">開始</div>
<svg style="position:absolute;left:1152px;top:85px;" width="8" height="5" viewBox="0 0 8 5"><path d="M0 0h8l-4 4z" fill="#999"/></svg>
<div style="left:1166px;top:77px;width:1px;height:21px;background:#3f3f46"></div>
<svg style="position:absolute;left:1173px;top:78px;" width="18" height="18" viewBox="0 0 18 18"><path d="M3 3 h5 l2 2 h7 v10 h-14z" fill="#dcb67a"/><circle cx="6" cy="13" r="2.5" fill="none" stroke="#58b0f0" stroke-width="1.5"/><path d="M4 15 l-3 3" stroke="#58b0f0" stroke-width="1.5"/></svg>
<svg style="position:absolute;left:1195px;top:88px;" width="8" height="8" viewBox="0 0 8 8"><path d="M0 1h8 M0 3h8l-4 4z" stroke="#777" fill="#777"/></svg>
<div style="left:1208px;top:78px;width:4px;height:20px;background-image:radial-gradient(#444 0.7px,transparent 0.8px);background-size:3px 3px"></div>
<svg style="position:absolute;left:1216px;top:79px;" width="18" height="16" viewBox="0 0 18 16"><path d="M2 3 h14 M9 3 v12 M4 8 h4 v4 h-4z M10 8 h4" stroke="#555" stroke-width="2" fill="none"/></svg>
<div style="left:1239px;top:77px;width:1px;height:21px;background:#3f3f46"></div>
<svg style="position:absolute;left:1245px;top:78px;" width="10" height="20" viewBox="0 0 10 20"><path d="M1 1 l2 2 l-2 2 M5 1 l2 2 l-2 2 M1 12 h8 M1 15 h8 l-4 4z" stroke="#999" fill="#999" stroke-width="1"/></svg>
<div style="left:641px;top:107px;width:5px;height:48px;background:#3f3f46"></div>
<div style="left:641px;top:167px;width:5px;height:59px;background:#3f3f46"></div>
<div style="left:641px;top:238px;width:5px;height:37px;background:#3f3f46"></div>
<div style="left:650px;top:107px;white-space:nowrap;writing-mode:vertical-rl;text-orientation:sideways;font-size:12px;color:#d0d0d0;line-height:16px;">資料來源</div>
<div style="left:650px;top:167px;white-space:nowrap;writing-mode:vertical-rl;text-orientation:sideways;font-size:12px;color:#d0d0d0;line-height:16px;">伺服器總管</div>
<div style="left:650px;top:238px;white-space:nowrap;writing-mode:vertical-rl;text-orientation:sideways;font-size:12px;color:#d0d0d0;line-height:16px;">工具箱</div>
<div style="left:1274px;top:107px;width:6px;height:48px;background:#3f3f46"></div>
<div style="left:1255px;top:107px;white-space:nowrap;writing-mode:vertical-rl;text-orientation:sideways;font-size:12px;color:#d0d0d0;line-height:16px;">診斷工具</div>
<div style="left:671px;top:107px;width:136px;height:22px;background:#007acc"></div>
<div style="left:676px;top:110px;white-space:nowrap;font-size:12.5px;color:#fff;line-height:16px">Form1.vb [設計]</div>
<svg style="position:absolute;left:772px;top:112px;" width="13" height="12" viewBox="0 0 13 12"><path d="M1 6 h4 M5 3 v6 h5 v-6z M10 6h2" stroke="#fff" stroke-width="1.2" fill="none"/></svg>
<svg style="position:absolute;left:791px;top:112px;" width="12" height="12" viewBox="0 0 12 12"><path d="M2 2 L10 10 M10 2 L2 10" stroke="#fff" stroke-width="1.5"/></svg>
<svg style="position:absolute;left:1128px;top:115px;" width="10" height="6" viewBox="0 0 10 6"><path d="M0 0h10l-5 5z" fill="#f1f1f1"/></svg>
<div style="left:671px;top:128px;width:470px;height:2px;background:#007acc"></div>
<div style="left:671px;top:130px;width:470px;height:543px;background:#1e1e1e;border-left:1px solid #3f3f46;border-right:1px solid #3f3f46"></div>
<div style="left:671px;top:672px;width:470px;height:3px;background:#3f3f46"></div>
<div style="left:671px;top:675px;width:470px;height:81px;background:#1e1e1e;border-left:1px solid #3f3f46;border-right:1px solid #3f3f46"></div>
<svg style="position:absolute;left:696px;top:695px;" width="14" height="16" viewBox="0 0 14 16"><circle cx="7" cy="9.5" r="5.5" fill="none" stroke="#f1f1f1" stroke-width="1.8"/><rect x="4.5" y="1" width="5" height="2.5" fill="#f1f1f1"/><path d="M7 9.5 v-3" stroke="#f1f1f1" stroke-width="1.5"/><circle cx="7" cy="9.5" r="1.5" fill="#f1f1f1"/></svg>
<div style="left:714px;top:697px;white-space:nowrap;font-size:13px;color:#f1f1f1;line-height:15px">Timer1</div>
<div style="left:688px;top:145px;width:385px;height:306px;background:linear-gradient(180deg,#9fbedd 0px,#b9d3ec 26px,#c6dcf1 28px,#b7d0ea 100%);border:1px solid #3c6e96;border-radius:5px 5px 0 0"></div>
<div style="left:700px;top:154px;white-space:nowrap;font-size:12px;color:#1e1e1e;line-height:15px">出席狀況</div>
<div style="left:695px;top:174px;width:371px;height:270px;background:#f0f0f0;border:1px solid #a6bdd4"></div>
<div style="left:711px;top:184px;white-space:nowrap;font-size:16px;color:#1a1a1a;line-height:19px">最大座號：</div>
<div style="left:790px;top:180px;width:98px;height:29px;background:#fff;border:1px solid #cfd8e2"></div>
<div style="left:910px;top:184px;white-space:nowrap;font-size:16px;color:#1a1a1a;line-height:19px">出席人數：0</div>
<div style="left:712px;top:226px;width:26px;height:28px;border:1px solid #707070;border-radius:3px;background:linear-gradient(180deg,#f2f2f2 0%,#ebebeb 45%,#dddddd 55%,#cfcfcf 100%);box-shadow:inset 1px 1px #fff;text-align:center;font-size:17px;line-height:28px;color:#111">0</div><div style="left:746px;top:226px;width:26px;height:28px;border:1px solid #707070;border-radius:3px;background:linear-gradient(180deg,#f2f2f2 0%,#ebebeb 45%,#dddddd 55%,#cfcfcf 100%);box-shadow:inset 1px 1px #fff;text-align:center;font-size:17px;line-height:28px;color:#111">0</div><div style="left:780px;top:226px;width:26px;height:28px;border:1px solid #707070;border-radius:3px;background:linear-gradient(180deg,#f2f2f2 0%,#ebebeb 45%,#dddddd 55%,#cfcfcf 100%);box-shadow:inset 1px 1px #fff;text-align:center;font-size:17px;line-height:28px;color:#111">0</div><div style="left:814px;top:226px;width:26px;height:28px;border:1px solid #707070;border-radius:3px;background:linear-gradient(180deg,#f2f2f2 0%,#ebebeb 45%,#dddddd 55%,#cfcfcf 100%);box-shadow:inset 1px 1px #fff;text-align:center;font-size:17px;line-height:28px;color:#111">0</div><div style="left:848px;top:226px;width:26px;height:28px;border:1px solid #707070;border-radius:3px;background:linear-gradient(180deg,#f2f2f2 0%,#ebebeb 45%,#dddddd 55%,#cfcfcf 100%);box-shadow:inset 1px 1px #fff;text-align:center;font-size:17px;line-height:28px;color:#111">0</div><div style="left:882px;top:226px;width:26px;height:28px;border:1px solid #707070;border-radius:3px;background:linear-gradient(180deg,#f2f2f2 0%,#ebebeb 45%,#dddddd 55%,#cfcfcf 100%);box-shadow:inset 1px 1px #fff;text-align:center;font-size:17px;line-height:28px;color:#111">0</div><div style="left:916px;top:226px;width:26px;height:28px;border:1px solid #707070;border-radius:3px;background:linear-gradient(180deg,#f2f2f2 0%,#ebebeb 45%,#dddddd 55%,#cfcfcf 100%);box-shadow:inset 1px 1px #fff;text-align:center;font-size:17px;line-height:28px;color:#111">0</div><div style="left:950px;top:226px;width:26px;height:28px;border:1px solid #707070;border-radius:3px;background:linear-gradient(180deg,#f2f2f2 0%,#ebebeb 45%,#dddddd 55%,#cfcfcf 100%);box-shadow:inset 1px 1px #fff;text-align:center;font-size:17px;line-height:28px;color:#111">0</div><div style="left:984px;top:226px;width:26px;height:28px;border:1px solid #707070;border-radius:3px;background:linear-gradient(180deg,#f2f2f2 0%,#ebebeb 45%,#dddddd 55%,#cfcfcf 100%);box-shadow:inset 1px 1px #fff;text-align:center;font-size:17px;line-height:28px;color:#111">0</div><div style="left:1018px;top:226px;width:26px;height:28px;border:1px solid #707070;border-radius:3px;background:linear-gradient(180deg,#f2f2f2 0%,#ebebeb 45%,#dddddd 55%,#cfcfcf 100%);box-shadow:inset 1px 1px #fff;text-align:center;font-size:17px;line-height:28px;color:#111">0</div><div style="left:712px;top:262px;width:26px;height:28px;border:1px solid #707070;border-radius:3px;background:linear-gradient(180deg,#f2f2f2 0%,#ebebeb 45%,#dddddd 55%,#cfcfcf 100%);box-shadow:inset 1px 1px #fff;text-align:center;font-size:17px;line-height:28px;color:#111">0</div><div style="left:746px;top:262px;width:26px;height:28px;border:1px solid #707070;border-radius:3px;background:linear-gradient(180deg,#f2f2f2 0%,#ebebeb 45%,#dddddd 55%,#cfcfcf 100%);box-shadow:inset 1px 1px #fff;text-align:center;font-size:17px;line-height:28px;color:#111">0</div><div style="left:780px;top:262px;width:26px;height:28px;border:1px solid #707070;border-radius:3px;background:linear-gradient(180deg,#f2f2f2 0%,#ebebeb 45%,#dddddd 55%,#cfcfcf 100%);box-shadow:inset 1px 1px #fff;text-align:center;font-size:17px;line-height:28px;color:#111">0</div><div style="left:814px;top:262px;width:26px;height:28px;border:1px solid #707070;border-radius:3px;background:linear-gradient(180deg,#f2f2f2 0%,#ebebeb 45%,#dddddd 55%,#cfcfcf 100%);box-shadow:inset 1px 1px #fff;text-align:center;font-size:17px;line-height:28px;color:#111">0</div><div style="left:848px;top:262px;width:26px;height:28px;border:1px solid #707070;border-radius:3px;background:linear-gradient(180deg,#f2f2f2 0%,#ebebeb 45%,#dddddd 55%,#cfcfcf 100%);box-shadow:inset 1px 1px #fff;text-align:center;font-size:17px;line-height:28px;color:#111">0</div><div style="left:882px;top:262px;width:26px;height:28px;border:1px solid #707070;border-radius:3px;background:linear-gradient(180deg,#f2f2f2 0%,#ebebeb 45%,#dddddd 55%,#cfcfcf 100%);box-shadow:inset 1px 1px #fff;text-align:center;font-size:17px;line-height:28px;color:#111">0</div><div style="left:916px;top:262px;width:26px;height:28px;border:1px solid #707070;border-radius:3px;background:linear-gradient(180deg,#f2f2f2 0%,#ebebeb 45%,#dddddd 55%,#cfcfcf 100%);box-shadow:inset 1px 1px #fff;text-align:center;font-size:17px;line-height:28px;color:#111">0</div><div style="left:950px;top:262px;width:26px;height:28px;border:1px solid #707070;border-radius:3px;background:linear-gradient(180deg,#f2f2f2 0%,#ebebeb 45%,#dddddd 55%,#cfcfcf 100%);box-shadow:inset 1px 1px #fff;text-align:center;font-size:17px;line-height:28px;color:#111">0</div><div style="left:984px;top:262px;width:26px;height:28px;border:1px solid #707070;border-radius:3px;background:linear-gradient(180deg,#f2f2f2 0%,#ebebeb 45%,#dddddd 55%,#cfcfcf 100%);box-shadow:inset 1px 1px #fff;text-align:center;font-size:17px;line-height:28px;color:#111">0</div><div style="left:1018px;top:262px;width:26px;height:28px;border:1px solid #707070;border-radius:3px;background:linear-gradient(180deg,#f2f2f2 0%,#ebebeb 45%,#dddddd 55%,#cfcfcf 100%);box-shadow:inset 1px 1px #fff;text-align:center;font-size:17px;line-height:28px;color:#111">0</div><div style="left:712px;top:298px;width:26px;height:28px;border:1px solid #707070;border-radius:3px;background:linear-gradient(180deg,#f2f2f2 0%,#ebebeb 45%,#dddddd 55%,#cfcfcf 100%);box-shadow:inset 1px 1px #fff;text-align:center;font-size:17px;line-height:28px;color:#111">0</div><div style="left:746px;top:298px;width:26px;height:28px;border:1px solid #707070;border-radius:3px;background:linear-gradient(180deg,#f2f2f2 0%,#ebebeb 45%,#dddddd 55%,#cfcfcf 100%);box-shadow:inset 1px 1px #fff;text-align:center;font-size:17px;line-height:28px;color:#111">0</div><div style="left:780px;top:298px;width:26px;height:28px;border:1px solid #707070;border-radius:3px;background:linear-gradient(180deg,#f2f2f2 0%,#ebebeb 45%,#dddddd 55%,#cfcfcf 100%);box-shadow:inset 1px 1px #fff;text-align:center;font-size:17px;line-height:28px;color:#111">0</div><div style="left:814px;top:298px;width:26px;height:28px;border:1px solid #707070;border-radius:3px;background:linear-gradient(180deg,#f2f2f2 0%,#ebebeb 45%,#dddddd 55%,#cfcfcf 100%);box-shadow:inset 1px 1px #fff;text-align:center;font-size:17px;line-height:28px;color:#111">0</div><div style="left:848px;top:298px;width:26px;height:28px;border:1px solid #707070;border-radius:3px;background:linear-gradient(180deg,#f2f2f2 0%,#ebebeb 45%,#dddddd 55%,#cfcfcf 100%);box-shadow:inset 1px 1px #fff;text-align:center;font-size:17px;line-height:28px;color:#111">0</div><div style="left:882px;top:298px;width:26px;height:28px;border:1px solid #707070;border-radius:3px;background:linear-gradient(180deg,#f2f2f2 0%,#ebebeb 45%,#dddddd 55%,#cfcfcf 100%);box-shadow:inset 1px 1px #fff;text-align:center;font-size:17px;line-height:28px;color:#111">0</div><div style="left:916px;top:298px;width:26px;height:28px;border:1px solid #707070;border-radius:3px;background:linear-gradient(180deg,#f2f2f2 0%,#ebebeb 45%,#dddddd 55%,#cfcfcf 100%);box-shadow:inset 1px 1px #fff;text-align:center;font-size:17px;line-height:28px;color:#111">0</div><div style="left:950px;top:298px;width:26px;height:28px;border:1px solid #707070;border-radius:3px;background:linear-gradient(180deg,#f2f2f2 0%,#ebebeb 45%,#dddddd 55%,#cfcfcf 100%);box-shadow:inset 1px 1px #fff;text-align:center;font-size:17px;line-height:28px;color:#111">0</div><div style="left:984px;top:298px;width:26px;height:28px;border:1px solid #707070;border-radius:3px;background:linear-gradient(180deg,#f2f2f2 0%,#ebebeb 45%,#dddddd 55%,#cfcfcf 100%);box-shadow:inset 1px 1px #fff;text-align:center;font-size:17px;line-height:28px;color:#111">0</div><div style="left:1018px;top:298px;width:26px;height:28px;border:1px solid #707070;border-radius:3px;background:linear-gradient(180deg,#f2f2f2 0%,#ebebeb 45%,#dddddd 55%,#cfcfcf 100%);box-shadow:inset 1px 1px #fff;text-align:center;font-size:17px;line-height:28px;color:#111">0</div><div style="left:712px;top:334px;width:26px;height:28px;border:1px solid #707070;border-radius:3px;background:linear-gradient(180deg,#f2f2f2 0%,#ebebeb 45%,#dddddd 55%,#cfcfcf 100%);box-shadow:inset 1px 1px #fff;text-align:center;font-size:17px;line-height:28px;color:#111">0</div><div style="left:746px;top:334px;width:26px;height:28px;border:1px solid #707070;border-radius:3px;background:linear-gradient(180deg,#f2f2f2 0%,#ebebeb 45%,#dddddd 55%,#cfcfcf 100%);box-shadow:inset 1px 1px #fff;text-align:center;font-size:17px;line-height:28px;color:#111">0</div><div style="left:780px;top:334px;width:26px;height:28px;border:1px solid #707070;border-radius:3px;background:linear-gradient(180deg,#f2f2f2 0%,#ebebeb 45%,#dddddd 55%,#cfcfcf 100%);box-shadow:inset 1px 1px #fff;text-align:center;font-size:17px;line-height:28px;color:#111">0</div><div style="left:814px;top:334px;width:26px;height:28px;border:1px solid #707070;border-radius:3px;background:linear-gradient(180deg,#f2f2f2 0%,#ebebeb 45%,#dddddd 55%,#cfcfcf 100%);box-shadow:inset 1px 1px #fff;text-align:center;font-size:17px;line-height:28px;color:#111">0</div><div style="left:848px;top:334px;width:26px;height:28px;border:1px solid #707070;border-radius:3px;background:linear-gradient(180deg,#f2f2f2 0%,#ebebeb 45%,#dddddd 55%,#cfcfcf 100%);box-shadow:inset 1px 1px #fff;text-align:center;font-size:17px;line-height:28px;color:#111">0</div><div style="left:882px;top:334px;width:26px;height:28px;border:1px solid #707070;border-radius:3px;background:linear-gradient(180deg,#f2f2f2 0%,#ebebeb 45%,#dddddd 55%,#cfcfcf 100%);box-shadow:inset 1px 1px #fff;text-align:center;font-size:17px;line-height:28px;color:#111">0</div><div style="left:916px;top:334px;width:26px;height:28px;border:1px solid #707070;border-radius:3px;background:linear-gradient(180deg,#f2f2f2 0%,#ebebeb 45%,#dddddd 55%,#cfcfcf 100%);box-shadow:inset 1px 1px #fff;text-align:center;font-size:17px;line-height:28px;color:#111">0</div><div style="left:950px;top:334px;width:26px;height:28px;border:1px solid #707070;border-radius:3px;background:linear-gradient(180deg,#f2f2f2 0%,#ebebeb 45%,#dddddd 55%,#cfcfcf 100%);box-shadow:inset 1px 1px #fff;text-align:center;font-size:17px;line-height:28px;color:#111">0</div><div style="left:984px;top:334px;width:26px;height:28px;border:1px solid #707070;border-radius:3px;background:linear-gradient(180deg,#f2f2f2 0%,#ebebeb 45%,#dddddd 55%,#cfcfcf 100%);box-shadow:inset 1px 1px #fff;text-align:center;font-size:17px;line-height:28px;color:#111">0</div><div style="left:1018px;top:334px;width:26px;height:28px;border:1px solid #707070;border-radius:3px;background:linear-gradient(180deg,#f2f2f2 0%,#ebebeb 45%,#dddddd 55%,#cfcfcf 100%);box-shadow:inset 1px 1px #fff;text-align:center;font-size:17px;line-height:28px;color:#111">0</div><div style="left:712px;top:370px;width:26px;height:28px;border:1px solid #707070;border-radius:3px;background:linear-gradient(180deg,#f2f2f2 0%,#ebebeb 45%,#dddddd 55%,#cfcfcf 100%);box-shadow:inset 1px 1px #fff;text-align:center;font-size:17px;line-height:28px;color:#111">0</div><div style="left:746px;top:370px;width:26px;height:28px;border:1px solid #707070;border-radius:3px;background:linear-gradient(180deg,#f2f2f2 0%,#ebebeb 45%,#dddddd 55%,#cfcfcf 100%);box-shadow:inset 1px 1px #fff;text-align:center;font-size:17px;line-height:28px;color:#111">0</div><div style="left:780px;top:370px;width:26px;height:28px;border:1px solid #707070;border-radius:3px;background:linear-gradient(180deg,#f2f2f2 0%,#ebebeb 45%,#dddddd 55%,#cfcfcf 100%);box-shadow:inset 1px 1px #fff;text-align:center;font-size:17px;line-height:28px;color:#111">0</div><div style="left:814px;top:370px;width:26px;height:28px;border:1px solid #707070;border-radius:3px;background:linear-gradient(180deg,#f2f2f2 0%,#ebebeb 45%,#dddddd 55%,#cfcfcf 100%);box-shadow:inset 1px 1px #fff;text-align:center;font-size:17px;line-height:28px;color:#111">0</div><div style="left:848px;top:370px;width:26px;height:28px;border:1px solid #707070;border-radius:3px;background:linear-gradient(180deg,#f2f2f2 0%,#ebebeb 45%,#dddddd 55%,#cfcfcf 100%);box-shadow:inset 1px 1px #fff;text-align:center;font-size:17px;line-height:28px;color:#111">0</div><div style="left:882px;top:370px;width:26px;height:28px;border:1px solid #707070;border-radius:3px;background:linear-gradient(180deg,#f2f2f2 0%,#ebebeb 45%,#dddddd 55%,#cfcfcf 100%);box-shadow:inset 1px 1px #fff;text-align:center;font-size:17px;line-height:28px;color:#111">0</div><div style="left:916px;top:370px;width:26px;height:28px;border:1px solid #707070;border-radius:3px;background:linear-gradient(180deg,#f2f2f2 0%,#ebebeb 45%,#dddddd 55%,#cfcfcf 100%);box-shadow:inset 1px 1px #fff;text-align:center;font-size:17px;line-height:28px;color:#111">0</div><div style="left:950px;top:370px;width:26px;height:28px;border:1px solid #707070;border-radius:3px;background:linear-gradient(180deg,#f2f2f2 0%,#ebebeb 45%,#dddddd 55%,#cfcfcf 100%);box-shadow:inset 1px 1px #fff;text-align:center;font-size:17px;line-height:28px;color:#111">0</div><div style="left:984px;top:370px;width:26px;height:28px;border:1px solid #707070;border-radius:3px;background:linear-gradient(180deg,#f2f2f2 0%,#ebebeb 45%,#dddddd 55%,#cfcfcf 100%);box-shadow:inset 1px 1px #fff;text-align:center;font-size:17px;line-height:28px;color:#111">0</div><div style="left:1018px;top:370px;width:26px;height:28px;border:1px solid #707070;border-radius:3px;background:linear-gradient(180deg,#f2f2f2 0%,#ebebeb 45%,#dddddd 55%,#cfcfcf 100%);box-shadow:inset 1px 1px #fff;text-align:center;font-size:17px;line-height:28px;color:#111">0</div>
<div style="left:708px;top:222px;width:34px;height:36px;border:1px dotted #444"></div>
<div style="left:706px;top:220px;width:5px;height:5px;background:#fff;border:1px solid #000"></div>
<div style="left:712px;top:407px;width:332px;height:24px;border:1px solid #707070;border-radius:3px;background:linear-gradient(180deg,#f2f2f2 0%,#ebebeb 45%,#dddddd 55%,#cfcfcf 100%);box-shadow:inset 1px 1px #fff"></div>
<div style="left:862px;top:410px;white-space:nowrap;font-size:15px;color:#111;line-height:18px">確定</div>
<div style="left:671px;top:756px;width:470px;height:7px;background:#38383c"></div>
<div style="left:671px;top:763px;width:470px;height:192px;background:#2d2d30;border-left:1px solid #3f3f46;border-right:1px solid #3f3f46"></div>
<div style="left:677px;top:766px;white-space:nowrap;font-size:12.5px;color:#d0d0d0;line-height:16px">輸出</div>
<div style="left:708px;top:771px;width:378px;height:5px;background-image:radial-gradient(#46464a 0.7px,transparent 0.8px);background-size:4px 4px"></div>
<svg style="position:absolute;left:1089px;top:772px;" width="10" height="6" viewBox="0 0 10 6"><path d="M0 0h10l-5 5z" fill="#f1f1f1"/></svg>
<svg style="position:absolute;left:1105px;top:766px;" width="12" height="14" viewBox="0 0 12 14"><path d="M3 1 h6 M4 1 v7 h4 v-7 M2 8 h8 M6 8 v5" stroke="#f1f1f1" stroke-width="1.3" fill="none"/></svg>
<svg style="position:absolute;left:1122px;top:767px;" width="12" height="12" viewBox="0 0 12 12"><path d="M1.5 1.5 L10.5 10.5 M10.5 1.5 L1.5 10.5" stroke="#f1f1f1" stroke-width="1.5"/></svg>
<div style="left:679px;top:789px;white-space:nowrap;font-size:12.5px;color:#d0d0d0;line-height:16px">顯示輸出來源(S):</div>
<div style="left:778px;top:788px;width:300px;height:20px;background:#333337;border:1px solid #434346"></div>
<div style="left:783px;top:790px;white-space:nowrap;font-size:12.5px;color:#f1f1f1;line-height:16px">偵錯</div>
<svg style="position:absolute;left:1067px;top:796px;" width="8" height="5" viewBox="0 0 8 5"><path d="M0 0h8l-4 4z" fill="#999"/></svg>
<div style="left:1089px;top:790px;width:1px;height:18px;background:#3f3f46"></div>
<svg style="position:absolute;left:1092px;top:790px;" width="18" height="17" viewBox="0 0 18 17"><path d="M4 12 h12 M4 15 h12 M8 4 l-3 3 l3 3 M5 7 h8 v5" stroke="#555" stroke-width="1.5" fill="none"/></svg>
<div style="left:1116px;top:790px;width:1px;height:18px;background:#3f3f46"></div>
<svg style="position:absolute;left:1129px;top:792px;" width="8" height="6" viewBox="0 0 8 6"><path d="M1 1 l2 2 l-2 2 M5 1 l2 2 l-2 2" stroke="#999" fill="none"/></svg>
<div style="left:672px;top:808px;width:452px;height:108px;background:#1e1e1e"></div>
<div style="left:672px;top:811px;width:452px;height:15px;overflow:hidden"><div style="left:-672px;top:-811px;width:1280px;height:1024px">
<div style="left:683px;top:811px;white-space:nowrap;font-family:Liberation Mono,monospace;font-size:10px;color:#dcdcdc;line-height:15px">WindowsApp1.exe' (CLR v4.0.30319: WindowsApp1.exe): <span style="font-size:12px">已載入</span> 'C:\Windows\Mic</div>
</div></div>
<div style="left:672px;top:826px;width:452px;height:15px;overflow:hidden"><div style="left:-672px;top:-826px;width:1280px;height:1024px">
<div style="left:683px;top:826px;white-space:nowrap;font-family:Liberation Mono,monospace;font-size:10px;color:#dcdcdc;line-height:15px">WindowsApp1.exe' (CLR v4.0.30319: WindowsApp1.exe): <span style="font-size:12px">已載入</span> 'C:\Windows\Mic</div>
</div></div>
<div style="left:672px;top:841px;width:452px;height:15px;overflow:hidden"><div style="left:-672px;top:-841px;width:1280px;height:1024px">
<div style="left:683px;top:841px;white-space:nowrap;font-family:Liberation Mono,monospace;font-size:10px;color:#dcdcdc;line-height:15px">WindowsApp1.exe' (CLR v4.0.30319: WindowsApp1.exe): <span style="font-size:12px">已載入</span> 'C:\Windows\Mic</div>
</div></div>
<div style="left:672px;top:856px;width:452px;height:15px;overflow:hidden"><div style="left:-672px;top:-856px;width:1280px;height:1024px">
<div style="left:683px;top:856px;white-space:nowrap;font-family:Liberation Mono,monospace;font-size:10px;color:#dcdcdc;line-height:15px">WindowsApp1.exe' (CLR v4.0.30319: WindowsApp1.exe): <span style="font-size:12px">已載入</span> 'C:\Windows\Mic</div>
</div></div>
<div style="left:672px;top:871px;width:452px;height:15px;overflow:hidden"><div style="left:-672px;top:-871px;width:1280px;height:1024px">
<div style="left:683px;top:871px;white-space:nowrap;font-family:Liberation Mono,monospace;font-size:10px;color:#dcdcdc;line-height:15px">WindowsApp1.exe' (CLR v4.0.30319: WindowsApp1.exe): <span style="font-size:12px">已載入</span> 'C:\Windows\Mic</div>
</div></div>
<div style="left:672px;top:886px;width:452px;height:15px;overflow:hidden"><div style="left:-672px;top:-886px;width:1280px;height:1024px">
<div style="left:683px;top:886px;white-space:nowrap;font-family:Liberation Mono,monospace;font-size:10px;color:#dcdcdc;line-height:15px">'[2364] WindowsApp1.exe' <span style="font-size:12px">程式以返回碼</span> 0 (0x0) <span style="font-size:12px">結束。</span></div>
</div></div>
<div style="left:1124px;top:808px;width:16px;height:108px;background:#3e3e42"></div>
<svg style="position:absolute;left:1127px;top:813px;" width="10" height="7" viewBox="0 0 10 7"><path d="M0 6 L5 1 L10 6z" fill="#999"/></svg>
<svg style="position:absolute;left:1127px;top:899px;" width="10" height="7" viewBox="0 0 10 7"><path d="M0 1 L5 6 L10 1z" fill="#999"/></svg>
<div style="left:1129px;top:848px;width:6px;height:25px;background:#686868"></div>
<div style="left:672px;top:916px;width:468px;height:17px;background:#3e3e42"></div>
<svg style="position:absolute;left:677px;top:920px;" width="7" height="10" viewBox="0 0 7 10"><path d="M6 0 L1 5 L6 10z" fill="#999"/></svg>
<svg style="position:absolute;left:1110px;top:920px;" width="7" height="10" viewBox="0 0 7 10"><path d="M1 0 L6 5 L1 10z" fill="#999"/></svg>
<div style="left:689px;top:920px;width:106px;height:9px;background:#686868"></div>
<div style="left:1124px;top:916px;width:16px;height:17px;background:#3e3e42"></div>
<div style="left:677px;top:937px;white-space:nowrap;font-size:12.5px;color:#d0d0d0;line-height:16px">錯誤清單</div>
<div style="left:731px;top:933px;width:36px;height:20px;background:#1e1e1e;border:1px solid #3f3f46;border-top:none"></div>
<div style="left:737px;top:935px;white-space:nowrap;font-size:12.5px;color:#3399ff;line-height:16px">輸出</div>
<div style="left:1147px;top:107px;width:102px;height:196px;background:#2d2d30;border:1px solid #3f3f46"></div>
<div style="left:1153px;top:110px;white-space:nowrap;font-size:12.5px;color:#d0d0d0;line-height:16px">方案...</div>
<svg style="position:absolute;left:1196px;top:115px;" width="10" height="6" viewBox="0 0 10 6"><path d="M0 0h10l-5 5z" fill="#f1f1f1"/></svg>
<svg style="position:absolute;left:1212px;top:110px;" width="10" height="14" viewBox="0 0 10 14"><path d="M2 1 h6 M3 1 v7 h4 v-7 M1 8 h8 M5 8 v5" stroke="#f1f1f1" stroke-width="1.3" fill="none"/></svg>
<svg style="position:absolute;left:1230px;top:112px;" width="11" height="11" viewBox="0 0 11 11"><path d="M1 1 L10 10 M10 1 L1 10" stroke="#f1f1f1" stroke-width="1.5"/></svg>
<svg style="position:absolute;left:1158px;top:135px;" width="16" height="16" viewBox="0 0 16 16"><circle cx="8" cy="8" r="7" fill="#555"/><path d="M4 8h8 M4 8 l3-3 M4 8 l3 3" stroke="#2d2d30" stroke-width="1.5"/></svg>
<svg style="position:absolute;left:1180px;top:135px;" width="16" height="16" viewBox="0 0 16 16"><circle cx="8" cy="8" r="7" fill="#555"/><path d="M4 8h8 M12 8 l-3-3 M12 8 l-3 3" stroke="#2d2d30" stroke-width="1.5"/></svg>
<svg style="position:absolute;left:1199px;top:133px;" width="18" height="18" viewBox="0 0 18 18"><path d="M2 9 L9 2 L16 9 M4 7 v9 h10 v-9" stroke="#f1f1f1" stroke-width="1.6" fill="none"/><rect x="7.5" y="11" width="3" height="5" fill="#f1f1f1"/></svg>
<svg style="position:absolute;left:1238px;top:133px;" width="8" height="6" viewBox="0 0 8 6"><path d="M1 1 l2 2 l-2 2 M5 1 l2 2 l-2 2" stroke="#999" fill="none"/></svg>
<div style="left:1148px;top:159px;width:100px;height:21px;background:#333337;border-bottom:1px solid #3f3f46"></div>
<div style="left:1148px;top:159px;width:70px;height:21px;overflow:hidden"><div style="left:-1148px;top:-159px;width:1280px;height:1024px">
<div style="left:1153px;top:162px;white-space:nowrap;font-size:12.5px;color:#999;line-height:16px">搜尋方案總管</div>
</div></div>
<svg style="position:absolute;left:1219px;top:162px;" width="16" height="16" viewBox="0 0 16 16"><circle cx="10" cy="6" r="4" fill="none" stroke="#fff" stroke-width="2"/><path d="M7 9 L2 14" stroke="#fff" stroke-width="2.5"/></svg>
<div style="left:1237px;top:159px;width:11px;height:21px;background:#3f3f46"></div>
<svg style="position:absolute;left:1238px;top:167px;" width="9" height="6" viewBox="0 0 9 6"><path d="M0 0h8l-4 4z" fill="#f1f1f1"/></svg>
<div style="left:1148px;top:181px;width:83px;height:105px;background:#252526"></div>
<div style="left:1148px;top:274px;width:83px;height:17px;background:#3f3f46"></div>
<svg style="position:absolute;left:1160px;top:186px;" width="16" height="16" viewBox="0 0 16 16"><rect x="3" y="1" width="12" height="12" fill="none" stroke="#ddd" stroke-width="1.3"/><rect x="3" y="1" width="12" height="2" fill="#ddd"/><path d="M1 9 l3 3 l-3 3 z M6 9 l-3 3 l3 3" fill="#a97ae0" stroke="#a97ae0"/></svg>
<div style="left:1148px;top:181px;width:83px;height:105px;overflow:hidden"><div style="left:-1148px;top:-181px;width:1280px;height:1024px">
<div style="left:1182px;top:186px;white-space:nowrap;font-size:12.5px;color:#f1f1f1;line-height:16px">方案 'WindowsApp1'</div>
<svg style="position:absolute;left:1159px;top:206px;" width="8" height="8" viewBox="0 0 8 8"><path d="M7 1 L7 7 L1 7z" fill="#f1f1f1"/></svg>
<svg style="position:absolute;left:1178px;top:203px;" width="16" height="16" viewBox="0 0 16 16"><rect x="1" y="1" width="14" height="13" fill="none" stroke="#58a0d8" stroke-width="1.2"/><text x="8" y="11" font-size="8" font-family="Liberation Sans" fill="#ddd" text-anchor="middle" font-weight="bold">VB</text></svg>
<div style="left:1198px;top:203px;white-space:nowrap;font-size:15px;color:#f1f1f1;line-height:18px">WindowsApp1</div>
<svg style="position:absolute;left:1196px;top:221px;" width="16" height="16" viewBox="0 0 16 16"><path d="M2 14 L8 8" stroke="#ccc" stroke-width="3"/><circle cx="10" cy="6" r="4" fill="#ccc"/><path d="M10 6 l4 -4" stroke="#252526" stroke-width="2.5"/></svg>
<div style="left:1217px;top:221px;white-space:nowrap;font-size:15px;color:#f1f1f1;line-height:18px">My Project</div>
<svg style="position:absolute;left:1176px;top:242px;" width="8" height="10" viewBox="0 0 8 10"><path d="M1 1 L7 5 L1 9z" fill="none" stroke="#ddd" stroke-width="1.2"/></svg>
<svg style="position:absolute;left:1196px;top:241px;" width="16" height="14" viewBox="0 0 16 14"><rect x="1" y="4" width="5" height="5" fill="#ddd"/><rect x="9" y="3" width="6" height="7" fill="#ddd"/><path d="M6 6.5h3" stroke="#ddd"/></svg>
<div style="left:1217px;top:239px;white-space:nowrap;font-size:15px;color:#f1f1f1;line-height:18px">參考</div>
<svg style="position:absolute;left:1196px;top:257px;" width="16" height="16" viewBox="0 0 16 16"><path d="M6 2 h6 l3 3 v10 h-9 M3 8 a3 3 0 1 0 4 0 M5 11 v5" stroke="#ddd" stroke-width="1.3" fill="none"/></svg>
<div style="left:1217px;top:256px;white-space:nowrap;font-size:15px;color:#f1f1f1;line-height:18px">App.config</div>
<svg style="position:absolute;left:1176px;top:277px;" width="8" height="10" viewBox="0 0 8 10"><path d="M1 1 L7 5 L1 9z" fill="none" stroke="#ddd" stroke-width="1.2"/></svg>
<svg style="position:absolute;left:1196px;top:276px;" width="16" height="14" viewBox="0 0 16 14"><rect x="1" y="1" width="14" height="12" fill="none" stroke="#ddd" stroke-width="1.5"/><rect x="1" y="1" width="14" height="3" fill="#ddd"/><path d="M4 8 h8" stroke="#ddd" stroke-width="1.5"/></svg>
<div style="left:1217px;top:274px;white-space:nowrap;font-size:15px;color:#f1f1f1;line-height:18px">Form1.vb</div>
</div></div>
<div style="left:1231px;top:181px;width:17px;height:105px;background:#3e3e42"></div>
<svg style="position:absolute;left:1234px;top:188px;" width="11" height="7" viewBox="0 0 11 7"><path d="M0 6 L5.5 1 L11 6z" fill="#999"/></svg>
<svg style="position:absolute;left:1234px;top:272px;" width="11" height="7" viewBox="0 0 11 7"><path d="M0 1 L5.5 6 L11 1z" fill="#999"/></svg>
<div style="left:1235px;top:200px;width:9px;height:57px;background:#686868"></div>
<div style="left:1148px;top:286px;width:83px;height:16px;background:#3e3e42"></div>
<svg style="position:absolute;left:1152px;top:289px;" width="7" height="10" viewBox="0 0 7 10"><path d="M6 0 L1 5 L6 10z" fill="#999"/></svg>
<svg style="position:absolute;left:1220px;top:289px;" width="7" height="10" viewBox="0 0 7 10"><path d="M1 0 L6 5 L1 10z" fill="#999"/></svg>
<div style="left:1165px;top:291px;width:21px;height:8px;background:#686868"></div>
<div style="left:1231px;top:286px;width:17px;height:16px;background:#2d2d30"></div>
<div style="left:1147px;top:302px;width:50px;height:20px;background:#252526"></div>
<div style="left:1153px;top:304px;white-space:nowrap;font-size:12.5px;color:#3399ff;line-height:16px">方案...</div>
<div style="left:1198px;top:302px;width:50px;height:20px;background:#2d2d30;border-left:1px solid #3f3f46"></div>
<div style="left:1203px;top:304px;white-space:nowrap;font-size:12.5px;color:#d0d0d0;line-height:16px">Tea...</div>
<div style="left:1147px;top:322px;width:102px;height:8px;background:#3f3f46"></div>
<div style="left:1147px;top:330px;width:102px;height:624px;background:#2d2d30;border:1px solid #3f3f46"></div>
<div style="left:1153px;top:333px;white-space:nowrap;font-size:12.5px;color:#d0d0d0;line-height:16px">屬性</div>
<svg style="position:absolute;left:1195px;top:340px;" width="10" height="6" viewBox="0 0 10 6"><path d="M0 0h10l-5 5z" fill="#f1f1f1"/></svg>
<svg style="position:absolute;left:1212px;top:334px;" width="10" height="14" viewBox="0 0 10 14"><path d="M2 1 h6 M3 1 v7 h4 v-7 M1 8 h8 M5 8 v5" stroke="#f1f1f1" stroke-width="1.3" fill="none"/></svg>
<svg style="position:absolute;left:1230px;top:336px;" width="11" height="11" viewBox="0 0 11 11"><path d="M1 1 L10 10 M10 1 L1 10" stroke="#f1f1f1" stroke-width="1.5"/></svg>
<div style="left:1148px;top:351px;width:100px;height:25px;background:#2d2d30"></div>
<div style="left:1148px;top:351px;width:82px;height:25px;overflow:hidden"><div style="left:-1148px;top:-351px;width:1280px;height:1024px">
<div style="left:1154px;top:356px;white-space:nowrap;font-size:13px;color:#f1f1f1;line-height:17px">CheckBox1 System.Windows</div>
</div></div>
<svg style="position:absolute;left:1236px;top:361px;" width="8" height="5" viewBox="0 0 8 5"><path d="M0 0h8l-4 4z" fill="#f1f1f1"/></svg>
<svg style="position:absolute;left:1153px;top:380px;" width="16" height="18" viewBox="0 0 16 18"><rect x="1" y="2" width="4" height="4" fill="#ccc"/><rect x="1" y="11" width="4" height="4" fill="#ccc"/><path d="M7 3h8M7 5h8M7 8h8M7 12h8M7 14h8M7 16h8" stroke="#ccc"/></svg>
<div style="left:1173px;top:377px;width:23px;height:24px;border:1px solid #3399ff"></div>
<svg style="position:absolute;left:1175px;top:380px;" width="20" height="18" viewBox="0 0 20 18"><text x="2" y="8" font-size="8" font-family="Liberation Sans" font-weight="bold" fill="#ccc">A</text><text x="2" y="17" font-size="8" font-family="Liberation Sans" font-weight="bold" fill="#ccc">Z</text><path d="M14 3 v11 M10 10 l4 4 l4-4" stroke="#58b0f0" stroke-width="2" fill="none"/></svg>
<div style="left:1200px;top:377px;width:23px;height:24px;border:1px solid #3399ff"></div>
<svg style="position:absolute;left:1203px;top:380px;" width="18" height="18" viewBox="0 0 18 18"><path d="M7 2 h7 l3 3 v11 h-10 M3 7 a3 3 0 1 0 4 0 M5 10 v6" stroke="#ccc" stroke-width="1.3" fill="none"/></svg>
<div style="left:1148px;top:403px;width:83px;height:490px;background:#252526"></div>
<div style="left:1148px;top:403px;width:83px;height:488px;overflow:hidden"><div style="left:-1148px;top:-403px;width:1280px;height:1024px">
<div style="left:1164px;top:403px;width:66px;height:19px;background:#1e1e1e;border-bottom:1px solid #2d2d30"></div><div style="left:1164px;top:403px;width:28px;height:19px;overflow:hidden;white-space:nowrap;padding-left:3px;font-size:13.5px;line-height:19px;color:#f1f1f1">FlatStyle</div><div style="left:1195px;top:403px;width:35px;height:19px;overflow:hidden;white-space:nowrap;font-size:13.5px;line-height:19px;color:#f1f1f1">Standard</div><div style="left:1164px;top:422px;width:66px;height:19px;background:#1e1e1e;border-bottom:1px solid #2d2d30"></div><div style="left:1164px;top:422px;width:28px;height:19px;overflow:hidden;white-space:nowrap;padding-left:3px;font-size:13.5px;line-height:19px;color:#f1f1f1">Font</div><div style="left:1151px;top:427px;width:10px;height:10px;border:1px solid #f1f1f1"></div><div style="left:1153px;top:431px;width:7px;height:1px;background:#f1f1f1"></div><div style="left:1156px;top:428px;width:1px;height:7px;background:#f1f1f1"></div><div style="left:1195px;top:422px;width:35px;height:19px;overflow:hidden;white-space:nowrap;font-size:13.5px;line-height:19px;color:#f1f1f1">微軟正黑體</div><div style="left:1164px;top:441px;width:66px;height:19px;background:#1e1e1e;border-bottom:1px solid #2d2d30"></div><div style="left:1164px;top:441px;width:28px;height:19px;overflow:hidden;white-space:nowrap;padding-left:3px;font-size:13.5px;line-height:19px;color:#f1f1f1">ForeColor</div><div style="left:1193px;top:442px;width:20px;height:17px;background:#000"></div><div style="left:1220px;top:441px;width:10px;height:19px;overflow:hidden;white-space:nowrap;font-size:13.5px;line-height:19px;color:#f1f1f1">C</div><div style="left:1164px;top:460px;width:66px;height:19px;background:#1e1e1e;border-bottom:1px solid #2d2d30"></div><div style="left:1164px;top:460px;width:28px;height:19px;overflow:hidden;white-space:nowrap;padding-left:3px;font-size:13.5px;line-height:19px;color:#f1f1f1">GenerateMember</div><div style="left:1195px;top:460px;width:35px;height:19px;overflow:hidden;white-space:nowrap;font-size:13.5px;line-height:19px;color:#f1f1f1">True</div><div style="left:1164px;top:479px;width:66px;height:19px;background:#1e1e1e;border-bottom:1px solid #2d2d30"></div><div style="left:1164px;top:479px;width:28px;height:19px;overflow:hidden;white-space:nowrap;padding-left:3px;font-size:13.5px;line-height:19px;color:#f1f1f1">Image</div><div style="left:1193px;top:481px;width:20px;height:16px;background:#1e1e1e;border:1px solid #444"></div><div style="left:1220px;top:479px;width:10px;height:19px;overflow:hidden;white-space:nowrap;font-size:13.5px;line-height:19px;color:#f1f1f1">(無)</div><div style="left:1164px;top:498px;width:66px;height:19px;background:#1e1e1e;border-bottom:1px solid #2d2d30"></div><div style="left:1164px;top:498px;width:28px;height:19px;overflow:hidden;white-space:nowrap;padding-left:3px;font-size:13.5px;line-height:19px;color:#f1f1f1">ImageAlign</div><div style="left:1195px;top:498px;width:35px;height:19px;overflow:hidden;white-space:nowrap;font-size:13.5px;line-height:19px;color:#f1f1f1">MiddleCenter</div><div style="left:1164px;top:517px;width:66px;height:19px;background:#1e1e1e;border-bottom:1px solid #2d2d30"></div><div style="left:1164px;top:517px;width:28px;height:19px;overflow:hidden;white-space:nowrap;padding-left:3px;font-size:13.5px;line-height:19px;color:#f1f1f1">ImageIndex</div><div style="left:1193px;top:519px;width:20px;height:16px;background:#1e1e1e;border:1px solid #444"></div><div style="left:1220px;top:517px;width:10px;height:19px;overflow:hidden;white-space:nowrap;font-size:13.5px;line-height:19px;color:#f1f1f1">(無)</div><div style="left:1164px;top:536px;width:66px;height:19px;background:#1e1e1e;border-bottom:1px solid #2d2d30"></div><div style="left:1164px;top:536px;width:28px;height:19px;overflow:hidden;white-space:nowrap;padding-left:3px;font-size:13.5px;line-height:19px;color:#f1f1f1">ImageKey</div><div style="left:1193px;top:538px;width:20px;height:16px;background:#1e1e1e;border:1px solid #444"></div><div style="left:1220px;top:536px;width:10px;height:19px;overflow:hidden;white-space:nowrap;font-size:13.5px;line-height:19px;color:#f1f1f1">(無)</div><div style="left:1164px;top:555px;width:66px;height:19px;background:#1e1e1e;border-bottom:1px solid #2d2d30"></div><div style="left:1164px;top:555px;width:28px;height:19px;overflow:hidden;white-space:nowrap;padding-left:3px;font-size:13.5px;line-height:19px;color:#f1f1f1">ImageList</div><div style="left:1193px;top:555px;width:37px;height:19px;overflow:hidden;white-space:nowrap;font-size:13.5px;line-height:19px;color:#f1f1f1">(無)</div><div style="left:1164px;top:574px;width:66px;height:19px;background:#1e1e1e;border-bottom:1px solid #2d2d30"></div><div style="left:1164px;top:574px;width:28px;height:19px;overflow:hidden;white-space:nowrap;padding-left:3px;font-size:13.5px;line-height:19px;color:#f1f1f1">Location</div><div style="left:1151px;top:579px;width:10px;height:10px;border:1px solid #f1f1f1"></div><div style="left:1153px;top:583px;width:7px;height:1px;background:#f1f1f1"></div><div style="left:1156px;top:580px;width:1px;height:7px;background:#f1f1f1"></div><div style="left:1195px;top:574px;width:35px;height:19px;overflow:hidden;white-space:nowrap;font-size:13.5px;line-height:19px;color:#f1f1f1">16, 51</div><div style="left:1164px;top:593px;width:66px;height:19px;background:#1e1e1e;border-bottom:1px solid #2d2d30"></div><div style="left:1164px;top:593px;width:28px;height:19px;overflow:hidden;white-space:nowrap;padding-left:3px;font-size:13.5px;line-height:19px;color:#f1f1f1">Locked</div><div style="left:1195px;top:593px;width:35px;height:19px;overflow:hidden;white-space:nowrap;font-size:13.5px;line-height:19px;color:#f1f1f1">False</div><div style="left:1164px;top:612px;width:66px;height:19px;background:#1e1e1e;border-bottom:1px solid #2d2d30"></div><div style="left:1164px;top:612px;width:28px;height:19px;overflow:hidden;white-space:nowrap;padding-left:3px;font-size:13.5px;line-height:19px;color:#f1f1f1">Margin</div><div style="left:1151px;top:617px;width:10px;height:10px;border:1px solid #f1f1f1"></div><div style="left:1153px;top:621px;width:7px;height:1px;background:#f1f1f1"></div><div style="left:1156px;top:618px;width:1px;height:7px;background:#f1f1f1"></div><div style="left:1195px;top:612px;width:35px;height:19px;overflow:hidden;white-space:nowrap;font-size:13.5px;line-height:19px;color:#f1f1f1">3, 3, 3, 3</div><div style="left:1164px;top:631px;width:66px;height:19px;background:#1e1e1e;border-bottom:1px solid #2d2d30"></div><div style="left:1164px;top:631px;width:28px;height:19px;overflow:hidden;white-space:nowrap;padding-left:3px;font-size:13.5px;line-height:19px;color:#f1f1f1">MaximumSize</div><div style="left:1151px;top:636px;width:10px;height:10px;border:1px solid #f1f1f1"></div><div style="left:1153px;top:640px;width:7px;height:1px;background:#f1f1f1"></div><div style="left:1156px;top:637px;width:1px;height:7px;background:#f1f1f1"></div><div style="left:1195px;top:631px;width:35px;height:19px;overflow:hidden;white-space:nowrap;font-size:13.5px;line-height:19px;color:#f1f1f1">0, 0</div><div style="left:1164px;top:650px;width:66px;height:19px;background:#1e1e1e;border-bottom:1px solid #2d2d30"></div><div style="left:1164px;top:650px;width:28px;height:19px;overflow:hidden;white-space:nowrap;padding-left:3px;font-size:13.5px;line-height:19px;color:#f1f1f1">MinimumSize</div><div style="left:1151px;top:655px;width:10px;height:10px;border:1px solid #f1f1f1"></div><div style="left:1153px;top:659px;width:7px;height:1px;background:#f1f1f1"></div><div style="left:1156px;top:656px;width:1px;height:7px;background:#f1f1f1"></div><div style="left:1195px;top:650px;width:35px;height:19px;overflow:hidden;white-space:nowrap;font-size:13.5px;line-height:19px;color:#f1f1f1">0, 0</div><div style="left:1164px;top:669px;width:66px;height:19px;background:#1e1e1e;border-bottom:1px solid #2d2d30"></div><div style="left:1164px;top:669px;width:28px;height:19px;overflow:hidden;white-space:nowrap;padding-left:3px;font-size:13.5px;line-height:19px;color:#f1f1f1">Modifiers</div><div style="left:1195px;top:669px;width:35px;height:19px;overflow:hidden;white-space:nowrap;font-size:13.5px;line-height:19px;color:#f1f1f1">Friend</div><div style="left:1164px;top:688px;width:66px;height:19px;background:#1e1e1e;border-bottom:1px solid #2d2d30"></div><div style="left:1164px;top:688px;width:28px;height:19px;overflow:hidden;white-space:nowrap;padding-left:3px;font-size:13.5px;line-height:19px;color:#f1f1f1">Padding</div><div style="left:1151px;top:693px;width:10px;height:10px;border:1px solid #f1f1f1"></div><div style="left:1153px;top:697px;width:7px;height:1px;background:#f1f1f1"></div><div style="left:1156px;top:694px;width:1px;height:7px;background:#f1f1f1"></div><div style="left:1195px;top:688px;width:35px;height:19px;overflow:hidden;white-space:nowrap;font-size:13.5px;line-height:19px;color:#f1f1f1">0, 0, 0, 0</div><div style="left:1164px;top:707px;width:66px;height:19px;background:#1e1e1e;border-bottom:1px solid #2d2d30"></div><div style="left:1164px;top:707px;width:28px;height:19px;overflow:hidden;white-space:nowrap;padding-left:3px;font-size:13.5px;line-height:19px;color:#f1f1f1">RightToLeft</div><div style="left:1195px;top:707px;width:35px;height:19px;overflow:hidden;white-space:nowrap;font-size:13.5px;line-height:19px;color:#f1f1f1">No</div><div style="left:1164px;top:726px;width:66px;height:19px;background:#1e1e1e;border-bottom:1px solid #2d2d30"></div><div style="left:1164px;top:726px;width:28px;height:19px;overflow:hidden;white-space:nowrap;padding-left:3px;font-size:13.5px;line-height:19px;color:#f1f1f1">Size</div><div style="left:1151px;top:731px;width:10px;height:10px;border:1px solid #f1f1f1"></div><div style="left:1153px;top:735px;width:7px;height:1px;background:#f1f1f1"></div><div style="left:1156px;top:732px;width:1px;height:7px;background:#f1f1f1"></div><div style="left:1195px;top:726px;width:35px;height:19px;overflow:hidden;white-space:nowrap;font-size:13.5px;line-height:19px;color:#f1f1f1">28, 30</div><div style="left:1164px;top:745px;width:66px;height:19px;background:#1e1e1e;border-bottom:1px solid #2d2d30"></div><div style="left:1164px;top:745px;width:28px;height:19px;overflow:hidden;white-space:nowrap;padding-left:3px;font-size:13.5px;line-height:19px;color:#f1f1f1">TabIndex</div><div style="left:1195px;top:745px;width:35px;height:19px;overflow:hidden;white-space:nowrap;font-size:13.5px;line-height:19px;color:#f1f1f1">3</div><div style="left:1164px;top:764px;width:66px;height:19px;background:#1e1e1e;border-bottom:1px solid #2d2d30"></div><div style="left:1164px;top:764px;width:28px;height:19px;overflow:hidden;white-space:nowrap;padding-left:3px;font-size:13.5px;line-height:19px;color:#f1f1f1">TabStop</div><div style="left:1195px;top:764px;width:35px;height:19px;overflow:hidden;white-space:nowrap;font-size:13.5px;line-height:19px;color:#f1f1f1">False</div><div style="left:1164px;top:783px;width:66px;height:19px;background:#1e1e1e;border-bottom:1px solid #2d2d30"></div><div style="left:1164px;top:783px;width:28px;height:19px;overflow:hidden;white-space:nowrap;padding-left:3px;font-size:13.5px;line-height:19px;color:#f1f1f1">Tag</div><div style="left:1195px;top:783px;width:35px;height:19px;overflow:hidden;white-space:nowrap;font-size:13.5px;line-height:19px;color:#f1f1f1"></div><div style="left:1164px;top:802px;width:66px;height:19px;background:#1e1e1e;border-bottom:1px solid #2d2d30"></div><div style="left:1164px;top:802px;width:28px;height:19px;overflow:hidden;white-space:nowrap;padding-left:3px;font-size:13.5px;line-height:19px;color:#f1f1f1">Text</div><div style="left:1195px;top:802px;width:35px;height:19px;overflow:hidden;white-space:nowrap;font-size:13.5px;line-height:19px;color:#f1f1f1">0</div><div style="left:1164px;top:821px;width:66px;height:19px;background:#1e1e1e;border-bottom:1px solid #2d2d30"></div><div style="left:1164px;top:821px;width:28px;height:19px;overflow:hidden;white-space:nowrap;padding-left:3px;font-size:13.5px;line-height:19px;color:#f1f1f1">TextAlign</div><div style="left:1195px;top:821px;width:35px;height:19px;overflow:hidden;white-space:nowrap;font-size:13.5px;line-height:19px;color:#f1f1f1">MiddleCenter</div><div style="left:1164px;top:840px;width:66px;height:19px;background:#1e1e1e;border-bottom:1px solid #2d2d30"></div><div style="left:1164px;top:840px;width:28px;height:19px;overflow:hidden;white-space:nowrap;padding-left:3px;font-size:13.5px;line-height:19px;color:#f1f1f1">TextImageRelation</div><div style="left:1195px;top:840px;width:35px;height:19px;overflow:hidden;white-space:nowrap;font-size:13.5px;line-height:19px;color:#f1f1f1">Overlay</div><div style="left:1164px;top:859px;width:66px;height:19px;background:#1e1e1e;border-bottom:1px solid #2d2d30"></div><div style="left:1164px;top:859px;width:28px;height:19px;overflow:hidden;white-space:nowrap;padding-left:3px;font-size:13.5px;line-height:19px;color:#f1f1f1">ThreeState</div><div style="left:1195px;top:859px;width:35px;height:19px;overflow:hidden;white-space:nowrap;font-size:13.5px;line-height:19px;color:#f1f1f1">False</div><div style="left:1164px;top:878px;width:66px;height:19px;background:#1e1e1e;border-bottom:1px solid #2d2d30"></div><div style="left:1164px;top:878px;width:28px;height:19px;overflow:hidden;white-space:nowrap;padding-left:3px;font-size:13.5px;line-height:19px;color:#f1f1f1">UseCompatibleTextRendering</div><div style="left:1195px;top:878px;width:35px;height:19px;overflow:hidden;white-space:nowrap;font-size:13.5px;line-height:19px;color:#f1f1f1">False</div>
</div></div>
<div style="left:1230px;top:403px;width:18px;height:490px;background:#3e3e42"></div>
<svg style="position:absolute;left:1234px;top:408px;" width="11" height="7" viewBox="0 0 11 7"><path d="M0 6 L5.5 1 L11 6z" fill="#999"/></svg>
<svg style="position:absolute;left:1234px;top:878px;" width="11" height="7" viewBox="0 0 11 7"><path d="M0 1 L5.5 6 L11 1z" fill="#999"/></svg>
<div style="left:1235px;top:620px;width:9px;height:212px;background:#686868"></div>
<div style="left:1148px;top:893px;width:100px;height:60px;background:#252526;border-top:1px solid #3f3f46"></div>
<div style="left:1154px;top:896px;white-space:nowrap;font-size:13.5px;color:#f1f1f1;line-height:16px">Text</div>
<div style="left:1154px;top:914px;white-space:nowrap;font-size:12.5px;color:#d0d0d0;line-height:16px">與控制項關聯的</div>
<div style="left:1154px;top:930px;white-space:nowrap;font-size:12.5px;color:#d0d0d0;line-height:16px">文字。</div>
<div style="left:640px;top:960px;width:640px;height:24px;background:#007acc"></div>
<svg style="position:absolute;left:644px;top:965px;" width="18" height="14" viewBox="0 0 18 14"><path d="M4.5 1.5 H16 L12.5 12.5 H1 Z" fill="none" stroke="#fff" stroke-width="1.3"/></svg>
<svg style="position:absolute;left:670px;top:963px;" width="14" height="18" viewBox="0 0 14 18"><path d="M4 1 v6 M1 4 h12 M4 7 v10 h10 M13 4 v13" stroke="#fff" stroke-dasharray="1.5 1.5" fill="none"/></svg>
<div style="left:684px;top:963px;white-space:nowrap;font-size:13.5px;color:#fff;line-height:17px">16 , 51</div>
<svg style="position:absolute;left:827px;top:963px;" width="14" height="18" viewBox="0 0 14 18"><path d="M1 5 h12 M13 1 v8 M1 9 v8 h12" stroke="#fff" stroke-dasharray="1.5 1.5" fill="none"/><path d="M7 11 v6 M5 15 l2 2 l2-2" stroke="#fff" fill="none"/></svg>
<div style="left:842px;top:963px;white-space:nowrap;font-size:13.5px;color:#fff;line-height:17px;width:10px;overflow:hidden">28</div>
<svg style="position:absolute;left:1116px;top:964px;" width="14" height="16" viewBox="0 0 14 16"><path d="M7 15 V3 M2 8 L7 3 L12 8" stroke="#fff" stroke-width="2" fill="none"/></svg>
<div style="left:1137px;top:963px;white-space:nowrap;font-size:12px;color:#fff;line-height:17px">新增至原始檔控制</div>
<svg style="position:absolute;left:1238px;top:968px;" width="10" height="6" viewBox="0 0 10 6"><path d="M0 5 L5 0 L10 5z" fill="#fff"/></svg>
<div style="left:1266px;top:970px;width:10px;height:10px;background-image:radial-gradient(#9cc8ea 0.7px,transparent 0.8px);background-size:3px 3px"></div>
<div style="left:0px;top:984px;width:1280px;height:40px;background:linear-gradient(180deg,#98b0e0 0px,#6a88cc 2px,#6281c7 20px,#5a79c0 40px)"></div>
<div style="left:0;top:986px;width:1280px;height:38px;background:linear-gradient(90deg,rgba(40,60,90,0) 0px,rgba(40,60,90,.12) 60px,rgba(40,60,90,0) 120px,rgba(40,60,90,0) 470px,rgba(40,60,100,.18) 510px,rgba(40,60,100,0) 540px,rgba(60,100,60,.28) 600px,rgba(60,90,80,0) 630px,rgba(30,50,90,.25) 700px,rgba(40,60,100,.08) 730px,rgba(30,50,90,.22) 770px,rgba(40,60,100,.05) 800px,rgba(40,70,90,.2) 830px,rgba(40,60,100,0) 860px,rgba(30,50,90,.2) 900px,rgba(40,60,100,0) 940px,rgba(60,90,70,.22) 1000px,rgba(40,60,100,.1) 1040px,rgba(40,60,100,.25) 1170px,rgba(40,60,100,.35) 1280px)"></div>
<div style="left:0px;top:984px;width:1280px;height:1px;background:#2a3f6a"></div>
<div style="left:122px;top:986px;width:58px;height:36px;border:1px solid rgba(20,40,80,.6);border-radius:3px;background:linear-gradient(180deg,rgba(255,255,255,0.4),rgba(255,255,255,0.21999999999999997) 50%,rgba(255,255,255,0.3));box-shadow:inset 0 0 0 1px rgba(255,255,255,.35)"></div>
<div style="left:308px;top:986px;width:58px;height:36px;border:1px solid rgba(20,40,80,.6);border-radius:3px;background:linear-gradient(180deg,rgba(255,255,255,0.32),rgba(255,255,255,0.14) 50%,rgba(255,255,255,0.22));box-shadow:inset 0 0 0 1px rgba(255,255,255,.35)"></div>
<div style="left:370px;top:986px;width:58px;height:36px;border:1px solid rgba(20,40,80,.6);border-radius:3px;background:linear-gradient(180deg,rgba(255,255,255,0.52),rgba(255,255,255,0.33999999999999997) 50%,rgba(255,255,255,0.42));box-shadow:inset 0 0 0 1px rgba(255,255,255,.35)"></div>
<svg style="position:absolute;left:8px;top:986px;" width="38" height="38" viewBox="0 0 38 38"><defs><linearGradient id="orbg" x1="0" y1="0" x2="0" y2="1"><stop offset="0" stop-color="#c8d8e0"/><stop offset=".45" stop-color="#6f98b0"/><stop offset=".5" stop-color="#1d5a96"/><stop offset=".85" stop-color="#1a8ad0"/><stop offset="1" stop-color="#40d0f0"/></linearGradient></defs><circle cx="19" cy="19" r="18" fill="url(#orbg)" stroke="#2a4a6a" stroke-width="1"/><path d="M11 10 q4 -2 8 0.5 l-1.5 8 q-4 -2.5 -8 -0.5z" fill="#f05a22"/><path d="M20 11 q4 2 8 0 l-1.5 8 q-4 2 -8 0z" fill="#8cc63e"/><path d="M9.2 19 q4 -2 8 0.5 l-1.5 8 q-4 -2.5 -8 -0.5z" fill="#3aa8e0"/><path d="M18.2 20 q4 2 8 0 l-1.5 8 q-4 2 -8 0z" fill="#fcc020"/></svg>
<svg style="position:absolute;left:68px;top:986px;" width="40" height="36" viewBox="0 0 40 36"><path d="M31 21 H14 a8 8 0 0 0 15 4 h5 a13 13 0 1 1 0.5 -4z M14.5 16.5 h13 a7 7 0 0 0 -13 0z" fill="#3ab4ea" stroke="#1a70b0" stroke-width="1" fill-rule="evenodd"/><path d="M7 32 C2 28 12 10 24 5 C34 1 38 5 32 12" fill="none" stroke="#f5c000" stroke-width="2.8"/></svg>
<svg style="position:absolute;left:133px;top:989px;" width="36" height="32" viewBox="0 0 36 32"><path d="M3 6 h11 l3 3 h16 v20 h-30z" fill="#e8c860"/><rect x="5" y="9" width="26" height="6" fill="#fff"/><rect x="8" y="5" width="3" height="2" fill="#d22"/><rect x="20" y="7" width="3" height="2" fill="#2a2"/><path d="M3 14 h30 v15 h-30z" fill="#f4dc8a"/><path d="M10 20 h16 v9 h-3 v-6 h-10 v6 h-3z" fill="#6cc0e8"/></svg>
<svg style="position:absolute;left:194px;top:988px;" width="34" height="34" viewBox="0 0 34 34"><rect x="12" y="5" width="18" height="24" fill="#8fc6e8" opacity=".8"/><rect x="6" y="5" width="20" height="24" rx="2" fill="#f0f0f0" opacity=".9"/><circle cx="16" cy="17" r="9" fill="#f07820"/><path d="M13 12 l8 5 l-8 5z" fill="#fff"/></svg>
<svg style="position:absolute;left:256px;top:985px;" width="38" height="38" viewBox="0 0 38 38"><path d="M19 19 L6.88 12 A14 14 0 0 1 31.12 12 Z" fill="#de4a3c"/><path d="M19 19 L31.12 12 A14 14 0 0 1 19 33 Z" fill="#fbc02d"/><path d="M19 19 L19 33 A14 14 0 0 1 6.88 12 Z" fill="#2a9d4a"/><circle cx="19" cy="19" r="6.8" fill="#fff"/><circle cx="19" cy="19" r="5.2" fill="#4a8af0"/></svg>
<svg style="position:absolute;left:318px;top:988px;" width="38" height="34" viewBox="0 0 38 34"><rect x="16" y="1" width="10" height="6" fill="#3a8a30" transform="rotate(30 21 4)"/><rect x="8" y="9" width="10" height="6" fill="#c8b040" transform="rotate(20 13 12)"/><rect x="10" y="13" width="22" height="18" fill="#fff" stroke="#555"/><rect x="10" y="13" width="22" height="4" fill="#6cb"/><path d="M12 29 l4-10 l4 10z" fill="#b02020"/><text x="24" y="27" font-size="10" font-family="Liberation Sans" font-weight="bold" fill="#223">32</text></svg>
<svg style="position:absolute;left:378px;top:986px;" width="40" height="36" viewBox="0 0 40 36"><path d="M26 3 L34 5.5 L34 30 L26 33 Z" fill="#8a62c8"/><path d="M4 26 L26 27.5 L26 33 L4 28.5 Z" fill="#8a62c8"/><path d="M8 11 L15 17 L8 22.5 Z M22 8 L15 17 L22 24 Z" fill="none" stroke="#8a62c8" stroke-width="2.6" stroke-linejoin="round"/></svg>
<svg style="position:absolute;left:1022px;top:994px;" width="22" height="16" viewBox="0 0 22 16"><rect x="2" y="5" width="18" height="10" rx="1" fill="#ddd" stroke="#888"/><path d="M4 8h14M4 11h14" stroke="#999" stroke-dasharray="1.5 1"/><path d="M11 5 q0-4 4-4" stroke="#888" fill="none"/></svg>
<svg style="position:absolute;left:1046px;top:994px;" width="20" height="20" viewBox="0 0 20 20"><circle cx="10" cy="10" r="8" fill="#1c3d9c" stroke="#dde" stroke-width="1.5"/><text x="10" y="14.5" font-size="12" font-weight="bold" font-family="Liberation Sans" text-anchor="middle" fill="#fff">?</text></svg>
<svg style="position:absolute;left:1073px;top:992px;" width="14" height="24" viewBox="0 0 14 24"><rect x="4" y="2" width="7" height="5" fill="none" stroke="#fff"/><rect x="2" y="4" width="7" height="5" fill="#5b7cc4" stroke="#fff"/><path d="M3 16 h8 l-4 4z" fill="#fff"/></svg>
<svg style="position:absolute;left:1090px;top:998px;" width="12" height="10" viewBox="0 0 12 10"><path d="M1 8 L6 3 L11 8z" fill="#fff"/></svg>
<svg style="position:absolute;left:1110px;top:992px;" width="22" height="22" viewBox="0 0 22 22"><path d="M2 12 L11 8 L20 12 V20 H2 Z" fill="#f0a020" stroke="#b86a10" stroke-width=".8"/><path d="M11 2 V9" stroke="#f5c040" stroke-width="1.5"/><path d="M11 2 h7 l-2 2 l2 2 h-7z" fill="#f5b030"/><rect x="10" y="12" width="2" height="4" fill="#fff"/><rect x="10" y="17" width="2" height="2" fill="#fff"/></svg>
<svg style="position:absolute;left:1135px;top:994px;" width="20" height="18" viewBox="0 0 20 18"><path d="M2 6 h4 l5-4 v14 l-5-4 h-4z" fill="#fff"/><path d="M13 5 q3 4 0 8 M16 3 q5 6 0 12" stroke="#fff" fill="none" stroke-width="1.3"/></svg>
<svg style="position:absolute;left:1158px;top:992px;" width="22" height="22" viewBox="0 0 22 22"><rect x="3" y="3" width="12" height="10" fill="none" stroke="#fff" stroke-width="1.5"/><path d="M6 16 h12 v-10 M9 13 v5 h6" stroke="#fff" stroke-width="1.5" fill="none"/></svg>
<div style="left:1184px;top:987px;white-space:nowrap;font-size:12.5px;color:#fff;line-height:17px;width:80px;text-align:center">下午 01:16</div>
<div style="left:1184px;top:1005px;white-space:nowrap;font-size:13px;color:#fff;line-height:17px;width:80px;text-align:center">2017/11/29</div>
<div style="left:1265px;top:986px;width:15px;height:38px;border:1px solid rgba(20,40,80,.7);border-radius:2px;background:linear-gradient(90deg,rgba(255,255,255,.35),rgba(255,255,255,.15))"></div>
</body></html>
